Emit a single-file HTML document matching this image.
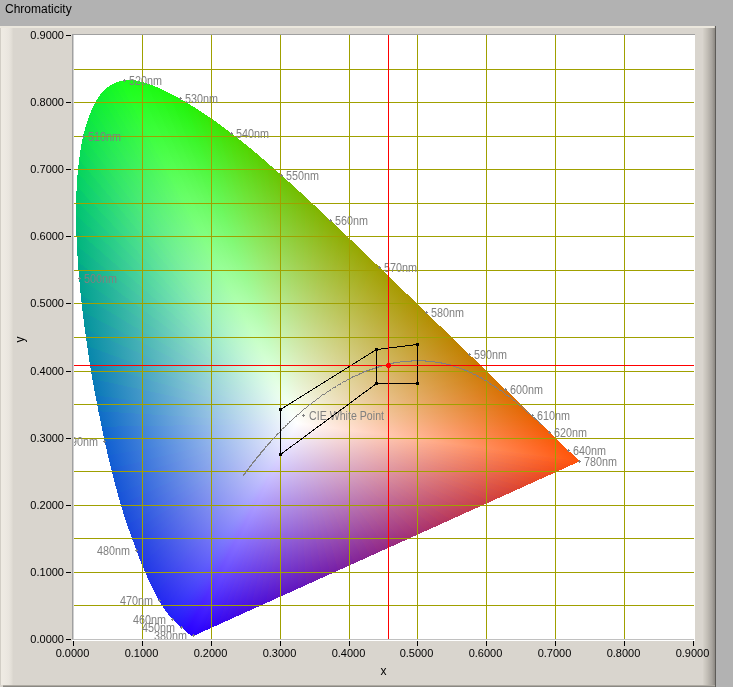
<!DOCTYPE html>
<html><head><meta charset="utf-8"><style>
html,body{margin:0;padding:0}
body{width:733px;height:687px;background:#b2b2b2;position:relative;overflow:hidden;font-family:"Liberation Sans",sans-serif;}
.t{position:absolute;white-space:nowrap}
#title{left:5px;top:2px;font-size:12px;color:#000}
#panel{position:absolute;left:0;top:26px;width:716px;height:661px;background:#d9d5ce}
#plot{position:absolute;left:72px;top:34px;width:623px;height:607px;background:#fff}
svg{position:absolute;left:0;top:0;will-change:transform}
#title{will-change:transform}
.tk{font-size:11px;fill:#000}
.wl{font-size:12.5px;fill:#808080}
</style></head><body>
<div class="t" id="title">Chromaticity</div>
<div id="panel"></div>
<div style="position:absolute;left:0;top:26px;width:714px;height:2px;background:#ebe7dd"></div>
<div style="position:absolute;left:0;top:28px;width:13px;height:657px;background:linear-gradient(to right,#d2cec6 0,#d2cec6 1px,#efebe3 1px,#ede9e2 5px,#e9e5de 9px,#e0dcd4 12px,#dad6ce 13px)"></div>
<div style="position:absolute;left:703px;top:28px;width:12px;height:659px;background:linear-gradient(to right,#d6d2ca,#c4c0b8 4px,#a8a49e 9px,#8c8882 12px)"></div>
<div style="position:absolute;left:715px;top:26px;width:1px;height:661px;background:#5e5c58"></div>
<div style="position:absolute;left:3px;top:685px;width:712px;height:1px;background:#aeaaa2"></div>
<div style="position:absolute;left:3px;top:686px;width:712px;height:1px;background:#8a8883"></div>
<div id="plot"></div>
<svg width="733" height="687" viewBox="0 0 733 687" shape-rendering="crispEdges">
<defs><linearGradient id="g0" gradientUnits="userSpaceOnUse" x1="297.39" y1="423.35" x2="297.39" y2="635.95"><stop offset="0" stop-color="#ffffff"/><stop offset="1" stop-color="#2800ff"/></linearGradient><linearGradient id="g1" gradientUnits="userSpaceOnUse" x1="297.39" y1="423.35" x2="193.82" y2="636.14"><stop offset="0" stop-color="#ffffff"/><stop offset="1" stop-color="#2800ff"/></linearGradient><linearGradient id="g2" gradientUnits="userSpaceOnUse" x1="297.39" y1="423.35" x2="193.82" y2="636.14"><stop offset="0" stop-color="#ffffff"/><stop offset="1" stop-color="#2800ff"/></linearGradient><linearGradient id="g3" gradientUnits="userSpaceOnUse" x1="297.39" y1="423.35" x2="297.39" y2="635.94"><stop offset="0" stop-color="#ffffff"/><stop offset="1" stop-color="#2800ff"/></linearGradient><linearGradient id="g4" gradientUnits="userSpaceOnUse" x1="297.39" y1="423.35" x2="297.39" y2="635.94"><stop offset="0" stop-color="#ffffff"/><stop offset="1" stop-color="#2800ff"/></linearGradient><linearGradient id="g5" gradientUnits="userSpaceOnUse" x1="297.39" y1="423.35" x2="349.90" y2="585.15"><stop offset="0" stop-color="#ffffff"/><stop offset="1" stop-color="#2800ff"/></linearGradient><linearGradient id="g6" gradientUnits="userSpaceOnUse" x1="297.39" y1="423.35" x2="340.42" y2="600.16"><stop offset="0" stop-color="#ffffff"/><stop offset="1" stop-color="#2800ff"/></linearGradient><linearGradient id="g7" gradientUnits="userSpaceOnUse" x1="297.39" y1="423.35" x2="355.58" y2="572.78"><stop offset="0" stop-color="#ffffff"/><stop offset="1" stop-color="#2800ff"/></linearGradient><linearGradient id="g8" gradientUnits="userSpaceOnUse" x1="297.39" y1="423.35" x2="340.42" y2="600.16"><stop offset="0" stop-color="#ffffff"/><stop offset="1" stop-color="#2800ff"/></linearGradient><linearGradient id="g9" gradientUnits="userSpaceOnUse" x1="297.39" y1="423.35" x2="333.47" y2="608.68"><stop offset="0" stop-color="#ffffff"/><stop offset="1" stop-color="#2800ff"/></linearGradient><linearGradient id="g10" gradientUnits="userSpaceOnUse" x1="297.39" y1="423.35" x2="297.39" y2="635.98"><stop offset="0" stop-color="#ffffff"/><stop offset="1" stop-color="#2800ff"/></linearGradient><linearGradient id="g11" gradientUnits="userSpaceOnUse" x1="297.39" y1="423.35" x2="297.39" y2="635.98"><stop offset="0" stop-color="#ffffff"/><stop offset="1" stop-color="#2800ff"/></linearGradient><linearGradient id="g12" gradientUnits="userSpaceOnUse" x1="297.39" y1="423.35" x2="253.70" y2="647.77"><stop offset="0" stop-color="#ffffff"/><stop offset="1" stop-color="#2800ff"/></linearGradient><linearGradient id="g13" gradientUnits="userSpaceOnUse" x1="297.39" y1="423.35" x2="297.39" y2="635.97"><stop offset="0" stop-color="#ffffff"/><stop offset="1" stop-color="#2800ff"/></linearGradient><linearGradient id="g14" gradientUnits="userSpaceOnUse" x1="297.39" y1="423.35" x2="333.47" y2="608.65"><stop offset="0" stop-color="#ffffff"/><stop offset="1" stop-color="#2800ff"/></linearGradient><linearGradient id="g15" gradientUnits="userSpaceOnUse" x1="297.39" y1="423.35" x2="355.55" y2="572.71"><stop offset="0" stop-color="#ffffff"/><stop offset="1" stop-color="#2800ff"/></linearGradient><linearGradient id="g16" gradientUnits="userSpaceOnUse" x1="297.39" y1="423.35" x2="361.08" y2="554.20"><stop offset="0" stop-color="#ffffff"/><stop offset="1" stop-color="#2800ff"/></linearGradient><linearGradient id="g17" gradientUnits="userSpaceOnUse" x1="297.39" y1="423.35" x2="362.37" y2="512.35"><stop offset="0" stop-color="#ffffff"/><stop offset="1" stop-color="#2800ff"/></linearGradient><linearGradient id="g18" gradientUnits="userSpaceOnUse" x1="297.39" y1="423.35" x2="363.46" y2="536.46"><stop offset="0" stop-color="#ffffff"/><stop offset="1" stop-color="#2800ff"/></linearGradient><linearGradient id="g19" gradientUnits="userSpaceOnUse" x1="297.39" y1="423.35" x2="355.56" y2="572.73"><stop offset="0" stop-color="#ffffff"/><stop offset="1" stop-color="#2800ff"/></linearGradient><linearGradient id="g20" gradientUnits="userSpaceOnUse" x1="297.39" y1="423.35" x2="333.48" y2="608.69"><stop offset="0" stop-color="#ffffff"/><stop offset="1" stop-color="#2800ff"/></linearGradient><linearGradient id="g21" gradientUnits="userSpaceOnUse" x1="297.39" y1="423.35" x2="328.34" y2="614.09"><stop offset="0" stop-color="#ffffff"/><stop offset="1" stop-color="#2800ff"/></linearGradient><linearGradient id="g22" gradientUnits="userSpaceOnUse" x1="297.39" y1="423.35" x2="297.39" y2="636.07"><stop offset="0" stop-color="#ffffff"/><stop offset="1" stop-color="#2800ff"/></linearGradient><linearGradient id="g23" gradientUnits="userSpaceOnUse" x1="297.39" y1="423.35" x2="297.39" y2="636.07"><stop offset="0" stop-color="#ffffff"/><stop offset="1" stop-color="#2800ff"/></linearGradient><linearGradient id="g24" gradientUnits="userSpaceOnUse" x1="297.39" y1="423.35" x2="297.39" y2="636.07"><stop offset="0" stop-color="#ffffff"/><stop offset="1" stop-color="#2800ff"/></linearGradient><linearGradient id="g25" gradientUnits="userSpaceOnUse" x1="297.39" y1="423.35" x2="297.39" y2="636.07"><stop offset="0" stop-color="#ffffff"/><stop offset="1" stop-color="#2800ff"/></linearGradient><linearGradient id="g26" gradientUnits="userSpaceOnUse" x1="297.39" y1="423.35" x2="297.39" y2="636.07"><stop offset="0" stop-color="#ffffff"/><stop offset="1" stop-color="#2800ff"/></linearGradient><linearGradient id="g27" gradientUnits="userSpaceOnUse" x1="297.39" y1="423.35" x2="273.44" y2="644.82"><stop offset="0" stop-color="#ffffff"/><stop offset="1" stop-color="#2800ff"/></linearGradient><linearGradient id="g28" gradientUnits="userSpaceOnUse" x1="297.39" y1="423.35" x2="297.39" y2="636.07"><stop offset="0" stop-color="#ffffff"/><stop offset="1" stop-color="#2800ff"/></linearGradient><linearGradient id="g29" gradientUnits="userSpaceOnUse" x1="297.39" y1="423.35" x2="273.44" y2="644.83"><stop offset="0" stop-color="#ffffff"/><stop offset="1" stop-color="#2800ff"/></linearGradient><linearGradient id="g30" gradientUnits="userSpaceOnUse" x1="297.39" y1="423.35" x2="297.39" y2="636.06"><stop offset="0" stop-color="#ffffff"/><stop offset="1" stop-color="#2800ff"/></linearGradient><linearGradient id="g31" gradientUnits="userSpaceOnUse" x1="297.39" y1="423.35" x2="297.39" y2="636.06"><stop offset="0" stop-color="#ffffff"/><stop offset="1" stop-color="#2800ff"/></linearGradient><linearGradient id="g32" gradientUnits="userSpaceOnUse" x1="297.39" y1="423.35" x2="297.39" y2="636.06"><stop offset="0" stop-color="#ffffff"/><stop offset="1" stop-color="#2800ff"/></linearGradient><linearGradient id="g33" gradientUnits="userSpaceOnUse" x1="297.39" y1="423.35" x2="275.89" y2="644.21"><stop offset="0" stop-color="#ffffff"/><stop offset="1" stop-color="#2800ff"/></linearGradient><linearGradient id="g34" gradientUnits="userSpaceOnUse" x1="297.39" y1="423.35" x2="257.69" y2="647.66"><stop offset="0" stop-color="#ffffff"/><stop offset="1" stop-color="#2800ff"/></linearGradient><linearGradient id="g35" gradientUnits="userSpaceOnUse" x1="297.39" y1="423.35" x2="242.64" y2="648.35"><stop offset="0" stop-color="#ffffff"/><stop offset="1" stop-color="#2800ff"/></linearGradient><linearGradient id="g36" gradientUnits="userSpaceOnUse" x1="297.39" y1="423.35" x2="224.92" y2="646.71"><stop offset="0" stop-color="#ffffff"/><stop offset="1" stop-color="#2800ff"/></linearGradient><linearGradient id="g37" gradientUnits="userSpaceOnUse" x1="297.39" y1="423.35" x2="214.59" y2="644.50"><stop offset="0" stop-color="#ffffff"/><stop offset="1" stop-color="#2800ff"/></linearGradient><linearGradient id="g38" gradientUnits="userSpaceOnUse" x1="297.39" y1="423.35" x2="193.51" y2="636.79"><stop offset="0" stop-color="#ffffff"/><stop offset="1" stop-color="#2800ff"/></linearGradient><linearGradient id="g39" gradientUnits="userSpaceOnUse" x1="297.39" y1="423.35" x2="198.58" y2="639.06"><stop offset="0" stop-color="#ffffff"/><stop offset="1" stop-color="#2800ff"/></linearGradient><linearGradient id="g40" gradientUnits="userSpaceOnUse" x1="297.39" y1="423.35" x2="189.15" y2="634.61"><stop offset="0" stop-color="#ffffff"/><stop offset="1" stop-color="#2800ff"/></linearGradient><linearGradient id="g41" gradientUnits="userSpaceOnUse" x1="297.39" y1="423.35" x2="175.25" y2="626.03"><stop offset="0" stop-color="#ffffff"/><stop offset="1" stop-color="#2800ff"/></linearGradient><linearGradient id="g42" gradientUnits="userSpaceOnUse" x1="297.39" y1="423.35" x2="179.24" y2="628.76"><stop offset="0" stop-color="#ffffff"/><stop offset="1" stop-color="#2800ff"/></linearGradient><linearGradient id="g43" gradientUnits="userSpaceOnUse" x1="297.39" y1="423.35" x2="168.98" y2="621.23"><stop offset="0" stop-color="#ffffff"/><stop offset="1" stop-color="#2800ff"/></linearGradient><linearGradient id="g44" gradientUnits="userSpaceOnUse" x1="297.39" y1="423.35" x2="167.32" y2="619.84"><stop offset="0" stop-color="#ffffff"/><stop offset="1" stop-color="#2800ff"/></linearGradient><linearGradient id="g45" gradientUnits="userSpaceOnUse" x1="297.39" y1="423.35" x2="161.42" y2="614.49"><stop offset="0" stop-color="#ffffff"/><stop offset="1" stop-color="#2800ff"/></linearGradient><linearGradient id="g46" gradientUnits="userSpaceOnUse" x1="297.39" y1="423.35" x2="157.36" y2="610.35"><stop offset="0" stop-color="#ffffff"/><stop offset="1" stop-color="#2800ff"/></linearGradient><linearGradient id="g47" gradientUnits="userSpaceOnUse" x1="297.39" y1="423.35" x2="155.73" y2="608.57"><stop offset="0" stop-color="#ffffff"/><stop offset="1" stop-color="#2800ff"/></linearGradient><linearGradient id="g48" gradientUnits="userSpaceOnUse" x1="297.39" y1="423.35" x2="154.36" y2="607.02"><stop offset="0" stop-color="#ffffff"/><stop offset="1" stop-color="#2800ff"/></linearGradient><linearGradient id="g49" gradientUnits="userSpaceOnUse" x1="297.39" y1="423.35" x2="153.19" y2="605.67"><stop offset="0" stop-color="#ffffff"/><stop offset="1" stop-color="#2800ff"/></linearGradient><linearGradient id="g50" gradientUnits="userSpaceOnUse" x1="297.39" y1="423.35" x2="151.74" y2="603.93"><stop offset="0" stop-color="#ffffff"/><stop offset="1" stop-color="#2800ff"/></linearGradient><linearGradient id="g51" gradientUnits="userSpaceOnUse" x1="297.39" y1="423.35" x2="155.37" y2="608.15"><stop offset="0" stop-color="#ffffff"/><stop offset="1" stop-color="#2800ff"/></linearGradient><linearGradient id="g52" gradientUnits="userSpaceOnUse" x1="297.39" y1="423.35" x2="150.21" y2="602.03"><stop offset="0" stop-color="#ffffff"/><stop offset="1" stop-color="#2800ff"/></linearGradient><linearGradient id="g53" gradientUnits="userSpaceOnUse" x1="297.39" y1="423.35" x2="149.29" y2="600.85"><stop offset="0" stop-color="#ffffff"/><stop offset="1" stop-color="#2800ff"/></linearGradient><linearGradient id="g54" gradientUnits="userSpaceOnUse" x1="297.39" y1="423.35" x2="148.76" y2="600.15"><stop offset="0" stop-color="#ffffff"/><stop offset="1" stop-color="#2800ff"/></linearGradient><linearGradient id="g55" gradientUnits="userSpaceOnUse" x1="297.39" y1="423.35" x2="145.10" y2="595.06"><stop offset="0" stop-color="#ffffff"/><stop offset="1" stop-color="#2800ff"/></linearGradient><linearGradient id="g56" gradientUnits="userSpaceOnUse" x1="297.39" y1="423.35" x2="144.82" y2="594.66"><stop offset="0" stop-color="#ffffff"/><stop offset="1" stop-color="#2800ff"/></linearGradient><linearGradient id="g57" gradientUnits="userSpaceOnUse" x1="297.39" y1="423.35" x2="143.15" y2="592.13"><stop offset="0" stop-color="#ffffff"/><stop offset="1" stop-color="#2800ff"/></linearGradient><linearGradient id="g58" gradientUnits="userSpaceOnUse" x1="297.39" y1="423.35" x2="142.91" y2="591.76"><stop offset="0" stop-color="#ffffff"/><stop offset="1" stop-color="#2800ff"/></linearGradient><linearGradient id="g59" gradientUnits="userSpaceOnUse" x1="297.39" y1="423.35" x2="145.13" y2="595.09"><stop offset="0" stop-color="#ffffff"/><stop offset="1" stop-color="#2800ff"/></linearGradient><linearGradient id="g60" gradientUnits="userSpaceOnUse" x1="297.39" y1="423.35" x2="146.06" y2="596.41"><stop offset="0" stop-color="#ffffff"/><stop offset="1" stop-color="#2801ff"/></linearGradient><linearGradient id="g61" gradientUnits="userSpaceOnUse" x1="297.39" y1="423.35" x2="146.93" y2="597.59"><stop offset="0" stop-color="#ffffff"/><stop offset="1" stop-color="#2802ff"/></linearGradient><linearGradient id="g62" gradientUnits="userSpaceOnUse" x1="297.39" y1="423.35" x2="146.52" y2="597.04"><stop offset="0" stop-color="#ffffff"/><stop offset="1" stop-color="#2704fe"/></linearGradient><linearGradient id="g63" gradientUnits="userSpaceOnUse" x1="297.39" y1="423.35" x2="148.18" y2="599.24"><stop offset="0" stop-color="#ffffff"/><stop offset="1" stop-color="#2705fe"/></linearGradient><linearGradient id="g64" gradientUnits="userSpaceOnUse" x1="297.39" y1="423.35" x2="147.49" y2="598.34"><stop offset="0" stop-color="#ffffff"/><stop offset="1" stop-color="#2707fe"/></linearGradient><linearGradient id="g65" gradientUnits="userSpaceOnUse" x1="297.39" y1="423.35" x2="147.89" y2="598.87"><stop offset="0" stop-color="#ffffff"/><stop offset="1" stop-color="#2708fe"/></linearGradient><linearGradient id="g66" gradientUnits="userSpaceOnUse" x1="297.39" y1="423.35" x2="147.41" y2="598.24"><stop offset="0" stop-color="#ffffff"/><stop offset="1" stop-color="#260afd"/></linearGradient><linearGradient id="g67" gradientUnits="userSpaceOnUse" x1="297.39" y1="423.35" x2="148.58" y2="599.73"><stop offset="0" stop-color="#ffffff"/><stop offset="1" stop-color="#260bfd"/></linearGradient><linearGradient id="g68" gradientUnits="userSpaceOnUse" x1="297.39" y1="423.35" x2="147.34" y2="598.17"><stop offset="0" stop-color="#ffffff"/><stop offset="1" stop-color="#260dfd"/></linearGradient><linearGradient id="g69" gradientUnits="userSpaceOnUse" x1="297.39" y1="423.35" x2="147.58" y2="598.47"><stop offset="0" stop-color="#ffffff"/><stop offset="1" stop-color="#260efd"/></linearGradient><linearGradient id="g70" gradientUnits="userSpaceOnUse" x1="297.39" y1="423.35" x2="148.00" y2="598.99"><stop offset="0" stop-color="#ffffff"/><stop offset="1" stop-color="#2510fc"/></linearGradient><linearGradient id="g71" gradientUnits="userSpaceOnUse" x1="297.39" y1="423.35" x2="148.28" y2="599.34"><stop offset="0" stop-color="#ffffff"/><stop offset="1" stop-color="#2511fc"/></linearGradient><linearGradient id="g72" gradientUnits="userSpaceOnUse" x1="297.39" y1="423.35" x2="147.15" y2="597.95"><stop offset="0" stop-color="#ffffff"/><stop offset="1" stop-color="#2513fc"/></linearGradient><linearGradient id="g73" gradientUnits="userSpaceOnUse" x1="297.39" y1="423.35" x2="145.99" y2="596.49"><stop offset="0" stop-color="#ffffff"/><stop offset="1" stop-color="#2514fc"/></linearGradient><linearGradient id="g74" gradientUnits="userSpaceOnUse" x1="297.39" y1="423.35" x2="143.74" y2="593.54"><stop offset="0" stop-color="#ffffff"/><stop offset="1" stop-color="#2416fb"/></linearGradient><linearGradient id="g75" gradientUnits="userSpaceOnUse" x1="297.39" y1="423.35" x2="142.40" y2="591.70"><stop offset="0" stop-color="#ffffff"/><stop offset="1" stop-color="#2417fb"/></linearGradient><linearGradient id="g76" gradientUnits="userSpaceOnUse" x1="297.39" y1="423.35" x2="142.76" y2="592.20"><stop offset="0" stop-color="#ffffff"/><stop offset="1" stop-color="#2419fb"/></linearGradient><linearGradient id="g77" gradientUnits="userSpaceOnUse" x1="297.39" y1="423.35" x2="141.07" y2="589.84"><stop offset="0" stop-color="#ffffff"/><stop offset="1" stop-color="#241afb"/></linearGradient><linearGradient id="g78" gradientUnits="userSpaceOnUse" x1="297.39" y1="423.35" x2="137.83" y2="585.04"><stop offset="0" stop-color="#ffffff"/><stop offset="1" stop-color="#231cfa"/></linearGradient><linearGradient id="g79" gradientUnits="userSpaceOnUse" x1="297.39" y1="423.35" x2="134.44" y2="579.45"><stop offset="0" stop-color="#ffffff"/><stop offset="1" stop-color="#231dfa"/></linearGradient><linearGradient id="g80" gradientUnits="userSpaceOnUse" x1="297.39" y1="423.35" x2="132.83" y2="576.58"><stop offset="0" stop-color="#ffffff"/><stop offset="1" stop-color="#231efa"/></linearGradient><linearGradient id="g81" gradientUnits="userSpaceOnUse" x1="297.39" y1="423.35" x2="132.65" y2="576.24"><stop offset="0" stop-color="#ffffff"/><stop offset="1" stop-color="#2320f8"/></linearGradient><linearGradient id="g82" gradientUnits="userSpaceOnUse" x1="297.39" y1="423.35" x2="130.03" y2="571.22"><stop offset="0" stop-color="#ffffff"/><stop offset="1" stop-color="#2320f8"/></linearGradient><linearGradient id="g83" gradientUnits="userSpaceOnUse" x1="297.39" y1="423.35" x2="126.60" y2="563.71"><stop offset="0" stop-color="#ffffff"/><stop offset="1" stop-color="#2322f6"/></linearGradient><linearGradient id="g84" gradientUnits="userSpaceOnUse" x1="297.39" y1="423.35" x2="123.34" y2="555.03"><stop offset="0" stop-color="#ffffff"/><stop offset="1" stop-color="#2322f6"/></linearGradient><linearGradient id="g85" gradientUnits="userSpaceOnUse" x1="297.39" y1="423.35" x2="121.71" y2="549.86"><stop offset="0" stop-color="#ffffff"/><stop offset="1" stop-color="#2324f4"/></linearGradient><linearGradient id="g86" gradientUnits="userSpaceOnUse" x1="297.39" y1="423.35" x2="120.74" y2="546.43"><stop offset="0" stop-color="#ffffff"/><stop offset="1" stop-color="#2324f4"/></linearGradient><linearGradient id="g87" gradientUnits="userSpaceOnUse" x1="297.39" y1="423.35" x2="119.57" y2="541.83"><stop offset="0" stop-color="#ffffff"/><stop offset="1" stop-color="#2326f2"/></linearGradient><linearGradient id="g88" gradientUnits="userSpaceOnUse" x1="297.39" y1="423.35" x2="118.29" y2="535.99"><stop offset="0" stop-color="#ffffff"/><stop offset="1" stop-color="#2326f2"/></linearGradient><linearGradient id="g89" gradientUnits="userSpaceOnUse" x1="297.39" y1="423.35" x2="117.09" y2="528.95"><stop offset="0" stop-color="#ffffff"/><stop offset="1" stop-color="#2328f0"/></linearGradient><linearGradient id="g90" gradientUnits="userSpaceOnUse" x1="297.39" y1="423.35" x2="116.54" y2="524.89"><stop offset="0" stop-color="#ffffff"/><stop offset="1" stop-color="#2329ef"/></linearGradient><linearGradient id="g91" gradientUnits="userSpaceOnUse" x1="297.39" y1="423.35" x2="116.25" y2="522.49"><stop offset="0" stop-color="#ffffff"/><stop offset="1" stop-color="#222bee"/></linearGradient><linearGradient id="g92" gradientUnits="userSpaceOnUse" x1="297.39" y1="423.35" x2="115.84" y2="518.74"><stop offset="0" stop-color="#ffffff"/><stop offset="1" stop-color="#222eec"/></linearGradient><linearGradient id="g93" gradientUnits="userSpaceOnUse" x1="297.39" y1="423.35" x2="115.38" y2="513.28"><stop offset="0" stop-color="#ffffff"/><stop offset="1" stop-color="#2130eb"/></linearGradient><linearGradient id="g94" gradientUnits="userSpaceOnUse" x1="297.39" y1="423.35" x2="115.09" y2="508.23"><stop offset="0" stop-color="#ffffff"/><stop offset="1" stop-color="#2132e9"/></linearGradient><linearGradient id="g95" gradientUnits="userSpaceOnUse" x1="297.39" y1="423.35" x2="114.95" y2="504.47"><stop offset="0" stop-color="#ffffff"/><stop offset="1" stop-color="#2034e8"/></linearGradient><linearGradient id="g96" gradientUnits="userSpaceOnUse" x1="297.39" y1="423.35" x2="114.86" y2="501.91"><stop offset="0" stop-color="#ffffff"/><stop offset="1" stop-color="#2036e6"/></linearGradient><linearGradient id="g97" gradientUnits="userSpaceOnUse" x1="297.39" y1="423.35" x2="114.76" y2="499.10"><stop offset="0" stop-color="#ffffff"/><stop offset="1" stop-color="#1f38e5"/></linearGradient><linearGradient id="g98" gradientUnits="userSpaceOnUse" x1="297.39" y1="423.35" x2="114.65" y2="495.86"><stop offset="0" stop-color="#ffffff"/><stop offset="1" stop-color="#1f3be3"/></linearGradient><linearGradient id="g99" gradientUnits="userSpaceOnUse" x1="297.39" y1="423.35" x2="114.53" y2="492.37"><stop offset="0" stop-color="#ffffff"/><stop offset="1" stop-color="#1e3de2"/></linearGradient><linearGradient id="g100" gradientUnits="userSpaceOnUse" x1="297.39" y1="423.35" x2="114.46" y2="490.89"><stop offset="0" stop-color="#ffffff"/><stop offset="1" stop-color="#1d40e0"/></linearGradient><linearGradient id="g101" gradientUnits="userSpaceOnUse" x1="297.39" y1="423.35" x2="114.39" y2="490.00"><stop offset="0" stop-color="#ffffff"/><stop offset="1" stop-color="#1c43de"/></linearGradient><linearGradient id="g102" gradientUnits="userSpaceOnUse" x1="297.39" y1="423.35" x2="114.13" y2="487.45"><stop offset="0" stop-color="#ffffff"/><stop offset="1" stop-color="#1a47dd"/></linearGradient><linearGradient id="g103" gradientUnits="userSpaceOnUse" x1="297.39" y1="423.35" x2="113.72" y2="483.90"><stop offset="0" stop-color="#ffffff"/><stop offset="1" stop-color="#194bdb"/></linearGradient><linearGradient id="g104" gradientUnits="userSpaceOnUse" x1="297.39" y1="423.35" x2="113.14" y2="479.38"><stop offset="0" stop-color="#ffffff"/><stop offset="1" stop-color="#184ed9"/></linearGradient><linearGradient id="g105" gradientUnits="userSpaceOnUse" x1="297.39" y1="423.35" x2="112.63" y2="475.77"><stop offset="0" stop-color="#ffffff"/><stop offset="1" stop-color="#1652d8"/></linearGradient><linearGradient id="g106" gradientUnits="userSpaceOnUse" x1="297.39" y1="423.35" x2="112.22" y2="473.32"><stop offset="0" stop-color="#ffffff"/><stop offset="1" stop-color="#1555d6"/></linearGradient><linearGradient id="g107" gradientUnits="userSpaceOnUse" x1="297.39" y1="423.35" x2="111.71" y2="470.93"><stop offset="0" stop-color="#ffffff"/><stop offset="1" stop-color="#1459d4"/></linearGradient><linearGradient id="g108" gradientUnits="userSpaceOnUse" x1="297.39" y1="423.35" x2="111.05" y2="468.32"><stop offset="0" stop-color="#ffffff"/><stop offset="1" stop-color="#125dd3"/></linearGradient><linearGradient id="g109" gradientUnits="userSpaceOnUse" x1="297.39" y1="423.35" x2="110.30" y2="465.82"><stop offset="0" stop-color="#ffffff"/><stop offset="1" stop-color="#1160d1"/></linearGradient><linearGradient id="g110" gradientUnits="userSpaceOnUse" x1="297.39" y1="423.35" x2="109.54" y2="463.69"><stop offset="0" stop-color="#ffffff"/><stop offset="1" stop-color="#0f65cd"/></linearGradient><linearGradient id="g111" gradientUnits="userSpaceOnUse" x1="297.39" y1="423.35" x2="108.84" y2="462.00"><stop offset="0" stop-color="#ffffff"/><stop offset="1" stop-color="#0e6cc6"/></linearGradient><linearGradient id="g112" gradientUnits="userSpaceOnUse" x1="297.39" y1="423.35" x2="107.88" y2="460.05"><stop offset="0" stop-color="#ffffff"/><stop offset="1" stop-color="#0c73bf"/></linearGradient><linearGradient id="g113" gradientUnits="userSpaceOnUse" x1="297.39" y1="423.35" x2="106.66" y2="457.85"><stop offset="0" stop-color="#ffffff"/><stop offset="1" stop-color="#0a79b8"/></linearGradient><linearGradient id="g114" gradientUnits="userSpaceOnUse" x1="297.39" y1="423.35" x2="105.02" y2="455.22"><stop offset="0" stop-color="#ffffff"/><stop offset="1" stop-color="#0980b1"/></linearGradient><linearGradient id="g115" gradientUnits="userSpaceOnUse" x1="297.39" y1="423.35" x2="103.36" y2="452.79"><stop offset="0" stop-color="#ffffff"/><stop offset="1" stop-color="#0787ab"/></linearGradient><linearGradient id="g116" gradientUnits="userSpaceOnUse" x1="297.39" y1="423.35" x2="101.82" y2="450.74"><stop offset="0" stop-color="#ffffff"/><stop offset="1" stop-color="#068ea4"/></linearGradient><linearGradient id="g117" gradientUnits="userSpaceOnUse" x1="297.39" y1="423.35" x2="99.94" y2="448.42"><stop offset="0" stop-color="#ffffff"/><stop offset="1" stop-color="#04949d"/></linearGradient><linearGradient id="g118" gradientUnits="userSpaceOnUse" x1="297.39" y1="423.35" x2="97.58" y2="445.72"><stop offset="0" stop-color="#ffffff"/><stop offset="1" stop-color="#029b96"/></linearGradient><linearGradient id="g119" gradientUnits="userSpaceOnUse" x1="297.39" y1="423.35" x2="94.50" y2="442.35"><stop offset="0" stop-color="#ffffff"/><stop offset="1" stop-color="#01a28f"/></linearGradient><linearGradient id="g120" gradientUnits="userSpaceOnUse" x1="297.39" y1="423.35" x2="91.34" y2="439.00"><stop offset="0" stop-color="#ffffff"/><stop offset="1" stop-color="#00a889"/></linearGradient><linearGradient id="g121" gradientUnits="userSpaceOnUse" x1="297.39" y1="423.35" x2="88.38" y2="435.95"><stop offset="0" stop-color="#ffffff"/><stop offset="1" stop-color="#00b083"/></linearGradient><linearGradient id="g122" gradientUnits="userSpaceOnUse" x1="297.39" y1="423.35" x2="84.56" y2="432.07"><stop offset="0" stop-color="#ffffff"/><stop offset="1" stop-color="#00b67d"/></linearGradient><linearGradient id="g123" gradientUnits="userSpaceOnUse" x1="297.39" y1="423.35" x2="79.83" y2="427.26"><stop offset="0" stop-color="#ffffff"/><stop offset="1" stop-color="#00be77"/></linearGradient><linearGradient id="g124" gradientUnits="userSpaceOnUse" x1="297.39" y1="423.35" x2="73.76" y2="420.92"><stop offset="0" stop-color="#ffffff"/><stop offset="1" stop-color="#00c471"/></linearGradient><linearGradient id="g125" gradientUnits="userSpaceOnUse" x1="297.39" y1="423.35" x2="67.26" y2="413.76"><stop offset="0" stop-color="#ffffff"/><stop offset="1" stop-color="#01ca6a"/></linearGradient><linearGradient id="g126" gradientUnits="userSpaceOnUse" x1="297.39" y1="423.35" x2="61.13" y2="406.62"><stop offset="0" stop-color="#ffffff"/><stop offset="1" stop-color="#03d064"/></linearGradient><linearGradient id="g127" gradientUnits="userSpaceOnUse" x1="297.39" y1="423.35" x2="53.96" y2="397.67"><stop offset="0" stop-color="#ffffff"/><stop offset="1" stop-color="#05d45c"/></linearGradient><linearGradient id="g128" gradientUnits="userSpaceOnUse" x1="297.39" y1="423.35" x2="45.88" y2="386.58"><stop offset="0" stop-color="#ffffff"/><stop offset="1" stop-color="#07da56"/></linearGradient><linearGradient id="g129" gradientUnits="userSpaceOnUse" x1="297.39" y1="423.35" x2="36.51" y2="371.82"><stop offset="0" stop-color="#ffffff"/><stop offset="1" stop-color="#09de4e"/></linearGradient><linearGradient id="g130" gradientUnits="userSpaceOnUse" x1="297.39" y1="423.35" x2="26.37" y2="352.23"><stop offset="0" stop-color="#ffffff"/><stop offset="1" stop-color="#0ae348"/></linearGradient><linearGradient id="g131" gradientUnits="userSpaceOnUse" x1="297.39" y1="423.35" x2="17.53" y2="329.58"><stop offset="0" stop-color="#ffffff"/><stop offset="1" stop-color="#0ce642"/></linearGradient><linearGradient id="g132" gradientUnits="userSpaceOnUse" x1="297.39" y1="423.35" x2="10.68" y2="303.13"><stop offset="0" stop-color="#ffffff"/><stop offset="1" stop-color="#0cea3c"/></linearGradient><linearGradient id="g133" gradientUnits="userSpaceOnUse" x1="297.39" y1="423.35" x2="7.06" y2="272.45"><stop offset="0" stop-color="#ffffff"/><stop offset="1" stop-color="#0eed36"/></linearGradient><linearGradient id="g134" gradientUnits="userSpaceOnUse" x1="297.39" y1="423.35" x2="8.83" y2="234.35"><stop offset="0" stop-color="#ffffff"/><stop offset="1" stop-color="#0ef030"/></linearGradient><linearGradient id="g135" gradientUnits="userSpaceOnUse" x1="297.39" y1="423.35" x2="23.56" y2="181.63"><stop offset="0" stop-color="#ffffff"/><stop offset="1" stop-color="#10f32b"/></linearGradient><linearGradient id="g136" gradientUnits="userSpaceOnUse" x1="297.39" y1="423.35" x2="59.86" y2="125.49"><stop offset="0" stop-color="#ffffff"/><stop offset="1" stop-color="#12f627"/></linearGradient><linearGradient id="g137" gradientUnits="userSpaceOnUse" x1="297.39" y1="423.35" x2="110.95" y2="85.14"><stop offset="0" stop-color="#ffffff"/><stop offset="1" stop-color="#14f823"/></linearGradient><linearGradient id="g138" gradientUnits="userSpaceOnUse" x1="297.39" y1="423.35" x2="164.91" y2="64.59"><stop offset="0" stop-color="#ffffff"/><stop offset="1" stop-color="#16fb1f"/></linearGradient><linearGradient id="g139" gradientUnits="userSpaceOnUse" x1="297.39" y1="423.35" x2="210.99" y2="59.63"><stop offset="0" stop-color="#ffffff"/><stop offset="1" stop-color="#18fe1b"/></linearGradient><linearGradient id="g140" gradientUnits="userSpaceOnUse" x1="297.39" y1="423.35" x2="271.83" y2="69.50"><stop offset="0" stop-color="#ffffff"/><stop offset="1" stop-color="#19fe18"/></linearGradient><linearGradient id="g141" gradientUnits="userSpaceOnUse" x1="297.39" y1="423.35" x2="332.23" y2="101.65"><stop offset="0" stop-color="#ffffff"/><stop offset="1" stop-color="#1afe17"/></linearGradient><linearGradient id="g142" gradientUnits="userSpaceOnUse" x1="297.39" y1="423.35" x2="364.61" y2="133.49"><stop offset="0" stop-color="#ffffff"/><stop offset="1" stop-color="#1afc15"/></linearGradient><linearGradient id="g143" gradientUnits="userSpaceOnUse" x1="297.39" y1="423.35" x2="379.77" y2="154.91"><stop offset="0" stop-color="#ffffff"/><stop offset="1" stop-color="#1bfc14"/></linearGradient><linearGradient id="g144" gradientUnits="userSpaceOnUse" x1="297.39" y1="423.35" x2="384.89" y2="163.64"><stop offset="0" stop-color="#ffffff"/><stop offset="1" stop-color="#1bfa12"/></linearGradient><linearGradient id="g145" gradientUnits="userSpaceOnUse" x1="297.39" y1="423.35" x2="391.73" y2="176.96"><stop offset="0" stop-color="#ffffff"/><stop offset="1" stop-color="#1cfa11"/></linearGradient><linearGradient id="g146" gradientUnits="userSpaceOnUse" x1="297.39" y1="423.35" x2="400.39" y2="198.54"><stop offset="0" stop-color="#ffffff"/><stop offset="1" stop-color="#1cf80f"/></linearGradient><linearGradient id="g147" gradientUnits="userSpaceOnUse" x1="297.39" y1="423.35" x2="404.58" y2="212.65"><stop offset="0" stop-color="#ffffff"/><stop offset="1" stop-color="#1df80e"/></linearGradient><linearGradient id="g148" gradientUnits="userSpaceOnUse" x1="297.39" y1="423.35" x2="406.67" y2="221.47"><stop offset="0" stop-color="#ffffff"/><stop offset="1" stop-color="#1df60c"/></linearGradient><linearGradient id="g149" gradientUnits="userSpaceOnUse" x1="297.39" y1="423.35" x2="407.28" y2="224.30"><stop offset="0" stop-color="#ffffff"/><stop offset="1" stop-color="#1ef60b"/></linearGradient><linearGradient id="g150" gradientUnits="userSpaceOnUse" x1="297.39" y1="423.35" x2="408.08" y2="228.17"><stop offset="0" stop-color="#ffffff"/><stop offset="1" stop-color="#20f40a"/></linearGradient><linearGradient id="g151" gradientUnits="userSpaceOnUse" x1="297.39" y1="423.35" x2="409.47" y2="235.76"><stop offset="0" stop-color="#ffffff"/><stop offset="1" stop-color="#24f108"/></linearGradient><linearGradient id="g152" gradientUnits="userSpaceOnUse" x1="297.39" y1="423.35" x2="410.37" y2="241.61"><stop offset="0" stop-color="#ffffff"/><stop offset="1" stop-color="#28ef08"/></linearGradient><linearGradient id="g153" gradientUnits="userSpaceOnUse" x1="297.39" y1="423.35" x2="411.08" y2="246.99"><stop offset="0" stop-color="#ffffff"/><stop offset="1" stop-color="#2cec06"/></linearGradient><linearGradient id="g154" gradientUnits="userSpaceOnUse" x1="297.39" y1="423.35" x2="411.53" y2="250.92"><stop offset="0" stop-color="#ffffff"/><stop offset="1" stop-color="#30ea06"/></linearGradient><linearGradient id="g155" gradientUnits="userSpaceOnUse" x1="297.39" y1="423.35" x2="411.98" y2="255.35"><stop offset="0" stop-color="#ffffff"/><stop offset="1" stop-color="#34e704"/></linearGradient><linearGradient id="g156" gradientUnits="userSpaceOnUse" x1="297.39" y1="423.35" x2="412.39" y2="260.38"><stop offset="0" stop-color="#ffffff"/><stop offset="1" stop-color="#38e504"/></linearGradient><linearGradient id="g157" gradientUnits="userSpaceOnUse" x1="297.39" y1="423.35" x2="412.69" y2="264.85"><stop offset="0" stop-color="#ffffff"/><stop offset="1" stop-color="#3ce202"/></linearGradient><linearGradient id="g158" gradientUnits="userSpaceOnUse" x1="297.39" y1="423.35" x2="412.86" y2="268.16"><stop offset="0" stop-color="#ffffff"/><stop offset="1" stop-color="#40e002"/></linearGradient><linearGradient id="g159" gradientUnits="userSpaceOnUse" x1="297.39" y1="423.35" x2="412.99" y2="270.94"><stop offset="0" stop-color="#ffffff"/><stop offset="1" stop-color="#44dd00"/></linearGradient><linearGradient id="g160" gradientUnits="userSpaceOnUse" x1="297.39" y1="423.35" x2="413.12" y2="274.33"><stop offset="0" stop-color="#ffffff"/><stop offset="1" stop-color="#48db00"/></linearGradient><linearGradient id="g161" gradientUnits="userSpaceOnUse" x1="297.39" y1="423.35" x2="413.21" y2="277.39"><stop offset="0" stop-color="#ffffff"/><stop offset="1" stop-color="#4bd800"/></linearGradient><linearGradient id="g162" gradientUnits="userSpaceOnUse" x1="297.39" y1="423.35" x2="413.28" y2="280.36"><stop offset="0" stop-color="#ffffff"/><stop offset="1" stop-color="#4fd600"/></linearGradient><linearGradient id="g163" gradientUnits="userSpaceOnUse" x1="297.39" y1="423.35" x2="413.33" y2="282.80"><stop offset="0" stop-color="#ffffff"/><stop offset="1" stop-color="#52d300"/></linearGradient><linearGradient id="g164" gradientUnits="userSpaceOnUse" x1="297.39" y1="423.35" x2="413.36" y2="284.32"><stop offset="0" stop-color="#ffffff"/><stop offset="1" stop-color="#56d100"/></linearGradient><linearGradient id="g165" gradientUnits="userSpaceOnUse" x1="297.39" y1="423.35" x2="413.41" y2="286.24"><stop offset="0" stop-color="#ffffff"/><stop offset="1" stop-color="#59ce00"/></linearGradient><linearGradient id="g166" gradientUnits="userSpaceOnUse" x1="297.39" y1="423.35" x2="413.46" y2="288.50"><stop offset="0" stop-color="#ffffff"/><stop offset="1" stop-color="#5dcc00"/></linearGradient><linearGradient id="g167" gradientUnits="userSpaceOnUse" x1="297.39" y1="423.35" x2="413.51" y2="290.50"><stop offset="0" stop-color="#ffffff"/><stop offset="1" stop-color="#60c900"/></linearGradient><linearGradient id="g168" gradientUnits="userSpaceOnUse" x1="297.39" y1="423.35" x2="413.53" y2="291.31"><stop offset="0" stop-color="#ffffff"/><stop offset="1" stop-color="#64c700"/></linearGradient><linearGradient id="g169" gradientUnits="userSpaceOnUse" x1="297.39" y1="423.35" x2="413.59" y2="292.65"><stop offset="0" stop-color="#ffffff"/><stop offset="1" stop-color="#67c400"/></linearGradient><linearGradient id="g170" gradientUnits="userSpaceOnUse" x1="297.39" y1="423.35" x2="413.63" y2="293.42"><stop offset="0" stop-color="#ffffff"/><stop offset="1" stop-color="#6ac200"/></linearGradient><linearGradient id="g171" gradientUnits="userSpaceOnUse" x1="297.39" y1="423.35" x2="413.71" y2="294.87"><stop offset="0" stop-color="#ffffff"/><stop offset="1" stop-color="#6ec000"/></linearGradient><linearGradient id="g172" gradientUnits="userSpaceOnUse" x1="297.39" y1="423.35" x2="413.78" y2="295.94"><stop offset="0" stop-color="#ffffff"/><stop offset="1" stop-color="#70be00"/></linearGradient><linearGradient id="g173" gradientUnits="userSpaceOnUse" x1="297.39" y1="423.35" x2="413.83" y2="296.46"><stop offset="0" stop-color="#ffffff"/><stop offset="1" stop-color="#74bc00"/></linearGradient><linearGradient id="g174" gradientUnits="userSpaceOnUse" x1="297.39" y1="423.35" x2="413.89" y2="297.13"><stop offset="0" stop-color="#ffffff"/><stop offset="1" stop-color="#76ba00"/></linearGradient><linearGradient id="g175" gradientUnits="userSpaceOnUse" x1="297.39" y1="423.35" x2="413.95" y2="297.63"><stop offset="0" stop-color="#ffffff"/><stop offset="1" stop-color="#7ab800"/></linearGradient><linearGradient id="g176" gradientUnits="userSpaceOnUse" x1="297.39" y1="423.35" x2="414.06" y2="298.43"><stop offset="0" stop-color="#ffffff"/><stop offset="1" stop-color="#7cb600"/></linearGradient><linearGradient id="g177" gradientUnits="userSpaceOnUse" x1="297.39" y1="423.35" x2="414.13" y2="298.90"><stop offset="0" stop-color="#ffffff"/><stop offset="1" stop-color="#80b400"/></linearGradient><linearGradient id="g178" gradientUnits="userSpaceOnUse" x1="297.39" y1="423.35" x2="414.21" y2="299.35"><stop offset="0" stop-color="#ffffff"/><stop offset="1" stop-color="#82b200"/></linearGradient><linearGradient id="g179" gradientUnits="userSpaceOnUse" x1="297.39" y1="423.35" x2="414.24" y2="299.50"><stop offset="0" stop-color="#ffffff"/><stop offset="1" stop-color="#86b000"/></linearGradient><linearGradient id="g180" gradientUnits="userSpaceOnUse" x1="297.39" y1="423.35" x2="414.30" y2="299.79"><stop offset="0" stop-color="#ffffff"/><stop offset="1" stop-color="#88ae00"/></linearGradient><linearGradient id="g181" gradientUnits="userSpaceOnUse" x1="297.39" y1="423.35" x2="414.37" y2="300.07"><stop offset="0" stop-color="#ffffff"/><stop offset="1" stop-color="#8bad00"/></linearGradient><linearGradient id="g182" gradientUnits="userSpaceOnUse" x1="297.39" y1="423.35" x2="414.48" y2="300.48"><stop offset="0" stop-color="#ffffff"/><stop offset="1" stop-color="#8dab00"/></linearGradient><linearGradient id="g183" gradientUnits="userSpaceOnUse" x1="297.39" y1="423.35" x2="414.52" y2="300.61"><stop offset="0" stop-color="#ffffff"/><stop offset="1" stop-color="#90aa00"/></linearGradient><linearGradient id="g184" gradientUnits="userSpaceOnUse" x1="297.39" y1="423.35" x2="414.57" y2="300.73"><stop offset="0" stop-color="#ffffff"/><stop offset="1" stop-color="#92a800"/></linearGradient><linearGradient id="g185" gradientUnits="userSpaceOnUse" x1="297.39" y1="423.35" x2="414.66" y2="300.98"><stop offset="0" stop-color="#ffffff"/><stop offset="1" stop-color="#95a700"/></linearGradient><linearGradient id="g186" gradientUnits="userSpaceOnUse" x1="297.39" y1="423.35" x2="414.71" y2="301.11"><stop offset="0" stop-color="#ffffff"/><stop offset="1" stop-color="#97a500"/></linearGradient><linearGradient id="g187" gradientUnits="userSpaceOnUse" x1="297.39" y1="423.35" x2="414.87" y2="301.46"><stop offset="0" stop-color="#ffffff"/><stop offset="1" stop-color="#9aa400"/></linearGradient><linearGradient id="g188" gradientUnits="userSpaceOnUse" x1="297.39" y1="423.35" x2="414.81" y2="301.34"><stop offset="0" stop-color="#ffffff"/><stop offset="1" stop-color="#9ca200"/></linearGradient><linearGradient id="g189" gradientUnits="userSpaceOnUse" x1="297.39" y1="423.35" x2="414.93" y2="301.57"><stop offset="0" stop-color="#ffffff"/><stop offset="1" stop-color="#9fa100"/></linearGradient><linearGradient id="g190" gradientUnits="userSpaceOnUse" x1="297.39" y1="423.35" x2="414.92" y2="301.56"><stop offset="0" stop-color="#ffffff"/><stop offset="1" stop-color="#a19f00"/></linearGradient><linearGradient id="g191" gradientUnits="userSpaceOnUse" x1="297.39" y1="423.35" x2="415.06" y2="301.78"><stop offset="0" stop-color="#ffffff"/><stop offset="1" stop-color="#a29e00"/></linearGradient><linearGradient id="g192" gradientUnits="userSpaceOnUse" x1="297.39" y1="423.35" x2="415.05" y2="301.77"><stop offset="0" stop-color="#ffffff"/><stop offset="1" stop-color="#a49c00"/></linearGradient><linearGradient id="g193" gradientUnits="userSpaceOnUse" x1="297.39" y1="423.35" x2="415.13" y2="301.87"><stop offset="0" stop-color="#ffffff"/><stop offset="1" stop-color="#a69a00"/></linearGradient><linearGradient id="g194" gradientUnits="userSpaceOnUse" x1="297.39" y1="423.35" x2="415.13" y2="301.87"><stop offset="0" stop-color="#ffffff"/><stop offset="1" stop-color="#a79900"/></linearGradient><linearGradient id="g195" gradientUnits="userSpaceOnUse" x1="297.39" y1="423.35" x2="415.12" y2="301.87"><stop offset="0" stop-color="#ffffff"/><stop offset="1" stop-color="#a99700"/></linearGradient><linearGradient id="g196" gradientUnits="userSpaceOnUse" x1="297.39" y1="423.35" x2="415.21" y2="301.96"><stop offset="0" stop-color="#ffffff"/><stop offset="1" stop-color="#aa9600"/></linearGradient><linearGradient id="g197" gradientUnits="userSpaceOnUse" x1="297.39" y1="423.35" x2="415.21" y2="301.96"><stop offset="0" stop-color="#ffffff"/><stop offset="1" stop-color="#ac9400"/></linearGradient><linearGradient id="g198" gradientUnits="userSpaceOnUse" x1="297.39" y1="423.35" x2="415.30" y2="302.04"><stop offset="0" stop-color="#ffffff"/><stop offset="1" stop-color="#ae9200"/></linearGradient><linearGradient id="g199" gradientUnits="userSpaceOnUse" x1="297.39" y1="423.35" x2="415.10" y2="301.88"><stop offset="0" stop-color="#ffffff"/><stop offset="1" stop-color="#af9100"/></linearGradient><linearGradient id="g200" gradientUnits="userSpaceOnUse" x1="297.39" y1="423.35" x2="415.20" y2="301.95"><stop offset="0" stop-color="#ffffff"/><stop offset="1" stop-color="#b18f00"/></linearGradient><linearGradient id="g201" gradientUnits="userSpaceOnUse" x1="297.39" y1="423.35" x2="414.99" y2="301.80"><stop offset="0" stop-color="#ffffff"/><stop offset="1" stop-color="#b38d00"/></linearGradient><linearGradient id="g202" gradientUnits="userSpaceOnUse" x1="297.39" y1="423.35" x2="415.20" y2="301.95"><stop offset="0" stop-color="#ffffff"/><stop offset="1" stop-color="#b58c00"/></linearGradient><linearGradient id="g203" gradientUnits="userSpaceOnUse" x1="297.39" y1="423.35" x2="415.09" y2="301.87"><stop offset="0" stop-color="#ffffff"/><stop offset="1" stop-color="#b78a00"/></linearGradient><linearGradient id="g204" gradientUnits="userSpaceOnUse" x1="297.39" y1="423.35" x2="415.08" y2="301.87"><stop offset="0" stop-color="#ffffff"/><stop offset="1" stop-color="#b98800"/></linearGradient><linearGradient id="g205" gradientUnits="userSpaceOnUse" x1="297.39" y1="423.35" x2="414.95" y2="301.80"><stop offset="0" stop-color="#ffffff"/><stop offset="1" stop-color="#bb8600"/></linearGradient><linearGradient id="g206" gradientUnits="userSpaceOnUse" x1="297.39" y1="423.35" x2="415.08" y2="301.86"><stop offset="0" stop-color="#ffffff"/><stop offset="1" stop-color="#bd8400"/></linearGradient><linearGradient id="g207" gradientUnits="userSpaceOnUse" x1="297.39" y1="423.35" x2="415.07" y2="301.86"><stop offset="0" stop-color="#ffffff"/><stop offset="1" stop-color="#bf8200"/></linearGradient><linearGradient id="g208" gradientUnits="userSpaceOnUse" x1="297.39" y1="423.35" x2="415.07" y2="301.85"><stop offset="0" stop-color="#ffffff"/><stop offset="1" stop-color="#c18100"/></linearGradient><linearGradient id="g209" gradientUnits="userSpaceOnUse" x1="297.39" y1="423.35" x2="415.06" y2="301.85"><stop offset="0" stop-color="#ffffff"/><stop offset="1" stop-color="#c37f00"/></linearGradient><linearGradient id="g210" gradientUnits="userSpaceOnUse" x1="297.39" y1="423.35" x2="415.20" y2="301.90"><stop offset="0" stop-color="#ffffff"/><stop offset="1" stop-color="#c57d00"/></linearGradient><linearGradient id="g211" gradientUnits="userSpaceOnUse" x1="297.39" y1="423.35" x2="415.51" y2="302.01"><stop offset="0" stop-color="#ffffff"/><stop offset="1" stop-color="#c77c00"/></linearGradient><linearGradient id="g212" gradientUnits="userSpaceOnUse" x1="297.39" y1="423.35" x2="415.18" y2="301.91"><stop offset="0" stop-color="#ffffff"/><stop offset="1" stop-color="#c97a00"/></linearGradient><linearGradient id="g213" gradientUnits="userSpaceOnUse" x1="297.39" y1="423.35" x2="415.52" y2="302.00"><stop offset="0" stop-color="#ffffff"/><stop offset="1" stop-color="#cb7900"/></linearGradient><linearGradient id="g214" gradientUnits="userSpaceOnUse" x1="297.39" y1="423.35" x2="415.34" y2="301.95"><stop offset="0" stop-color="#ffffff"/><stop offset="1" stop-color="#cd7800"/></linearGradient><linearGradient id="g215" gradientUnits="userSpaceOnUse" x1="297.39" y1="423.35" x2="415.33" y2="301.95"><stop offset="0" stop-color="#ffffff"/><stop offset="1" stop-color="#ce7600"/></linearGradient><linearGradient id="g216" gradientUnits="userSpaceOnUse" x1="297.39" y1="423.35" x2="414.93" y2="301.87"><stop offset="0" stop-color="#ffffff"/><stop offset="1" stop-color="#d07500"/></linearGradient><linearGradient id="g217" gradientUnits="userSpaceOnUse" x1="297.39" y1="423.35" x2="415.12" y2="301.90"><stop offset="0" stop-color="#ffffff"/><stop offset="1" stop-color="#d27400"/></linearGradient><linearGradient id="g218" gradientUnits="userSpaceOnUse" x1="297.39" y1="423.35" x2="415.11" y2="301.90"><stop offset="0" stop-color="#ffffff"/><stop offset="1" stop-color="#d47200"/></linearGradient><linearGradient id="g219" gradientUnits="userSpaceOnUse" x1="297.39" y1="423.35" x2="415.10" y2="301.90"><stop offset="0" stop-color="#ffffff"/><stop offset="1" stop-color="#d67100"/></linearGradient><linearGradient id="g220" gradientUnits="userSpaceOnUse" x1="297.39" y1="423.35" x2="415.32" y2="301.93"><stop offset="0" stop-color="#ffffff"/><stop offset="1" stop-color="#d86f00"/></linearGradient><linearGradient id="g221" gradientUnits="userSpaceOnUse" x1="297.39" y1="423.35" x2="415.07" y2="301.90"><stop offset="0" stop-color="#ffffff"/><stop offset="1" stop-color="#da6e00"/></linearGradient><linearGradient id="g222" gradientUnits="userSpaceOnUse" x1="297.39" y1="423.35" x2="415.06" y2="301.90"><stop offset="0" stop-color="#ffffff"/><stop offset="1" stop-color="#db6d00"/></linearGradient><linearGradient id="g223" gradientUnits="userSpaceOnUse" x1="297.39" y1="423.35" x2="415.04" y2="301.90"><stop offset="0" stop-color="#ffffff"/><stop offset="1" stop-color="#dd6c01"/></linearGradient><linearGradient id="g224" gradientUnits="userSpaceOnUse" x1="297.39" y1="423.35" x2="415.02" y2="301.90"><stop offset="0" stop-color="#ffffff"/><stop offset="1" stop-color="#df6b01"/></linearGradient><linearGradient id="g225" gradientUnits="userSpaceOnUse" x1="297.39" y1="423.35" x2="414.70" y2="301.88"><stop offset="0" stop-color="#ffffff"/><stop offset="1" stop-color="#e06901"/></linearGradient><linearGradient id="g226" gradientUnits="userSpaceOnUse" x1="297.39" y1="423.35" x2="414.66" y2="301.88"><stop offset="0" stop-color="#ffffff"/><stop offset="1" stop-color="#e26801"/></linearGradient><linearGradient id="g227" gradientUnits="userSpaceOnUse" x1="297.39" y1="423.35" x2="414.62" y2="301.88"><stop offset="0" stop-color="#ffffff"/><stop offset="1" stop-color="#e46702"/></linearGradient><linearGradient id="g228" gradientUnits="userSpaceOnUse" x1="297.39" y1="423.35" x2="414.24" y2="301.87"><stop offset="0" stop-color="#ffffff"/><stop offset="1" stop-color="#e56602"/></linearGradient><linearGradient id="g229" gradientUnits="userSpaceOnUse" x1="297.39" y1="423.35" x2="414.91" y2="301.88"><stop offset="0" stop-color="#ffffff"/><stop offset="1" stop-color="#e76502"/></linearGradient><linearGradient id="g230" gradientUnits="userSpaceOnUse" x1="297.39" y1="423.35" x2="414.88" y2="301.88"><stop offset="0" stop-color="#ffffff"/><stop offset="1" stop-color="#e96402"/></linearGradient><linearGradient id="g231" gradientUnits="userSpaceOnUse" x1="297.39" y1="423.35" x2="415.24" y2="301.87"><stop offset="0" stop-color="#ffffff"/><stop offset="1" stop-color="#ea6303"/></linearGradient><linearGradient id="g232" gradientUnits="userSpaceOnUse" x1="297.39" y1="423.35" x2="415.22" y2="301.87"><stop offset="0" stop-color="#ffffff"/><stop offset="1" stop-color="#eb6203"/></linearGradient><linearGradient id="g233" gradientUnits="userSpaceOnUse" x1="297.39" y1="423.35" x2="415.21" y2="301.87"><stop offset="0" stop-color="#ffffff"/><stop offset="1" stop-color="#ed6103"/></linearGradient><linearGradient id="g234" gradientUnits="userSpaceOnUse" x1="297.39" y1="423.35" x2="415.19" y2="301.87"><stop offset="0" stop-color="#ffffff"/><stop offset="1" stop-color="#ee6004"/></linearGradient><linearGradient id="g235" gradientUnits="userSpaceOnUse" x1="297.39" y1="423.35" x2="415.17" y2="301.88"><stop offset="0" stop-color="#ffffff"/><stop offset="1" stop-color="#ef6004"/></linearGradient><linearGradient id="g236" gradientUnits="userSpaceOnUse" x1="297.39" y1="423.35" x2="415.66" y2="301.86"><stop offset="0" stop-color="#ffffff"/><stop offset="1" stop-color="#f05f05"/></linearGradient><linearGradient id="g237" gradientUnits="userSpaceOnUse" x1="297.39" y1="423.35" x2="415.66" y2="301.86"><stop offset="0" stop-color="#ffffff"/><stop offset="1" stop-color="#f25e05"/></linearGradient><linearGradient id="g238" gradientUnits="userSpaceOnUse" x1="297.39" y1="423.35" x2="416.23" y2="301.83"><stop offset="0" stop-color="#ffffff"/><stop offset="1" stop-color="#f35d05"/></linearGradient><linearGradient id="g239" gradientUnits="userSpaceOnUse" x1="297.39" y1="423.35" x2="415.05" y2="301.89"><stop offset="0" stop-color="#ffffff"/><stop offset="1" stop-color="#f45c06"/></linearGradient><linearGradient id="g240" gradientUnits="userSpaceOnUse" x1="297.39" y1="423.35" x2="415.03" y2="301.90"><stop offset="0" stop-color="#ffffff"/><stop offset="1" stop-color="#f55c06"/></linearGradient><linearGradient id="g241" gradientUnits="userSpaceOnUse" x1="297.39" y1="423.35" x2="414.32" y2="301.95"><stop offset="0" stop-color="#ffffff"/><stop offset="1" stop-color="#f65b06"/></linearGradient><linearGradient id="g242" gradientUnits="userSpaceOnUse" x1="297.39" y1="423.35" x2="414.96" y2="301.90"><stop offset="0" stop-color="#ffffff"/><stop offset="1" stop-color="#f65b06"/></linearGradient><linearGradient id="g243" gradientUnits="userSpaceOnUse" x1="297.39" y1="423.35" x2="414.18" y2="301.97"><stop offset="0" stop-color="#ffffff"/><stop offset="1" stop-color="#f75b07"/></linearGradient><linearGradient id="g244" gradientUnits="userSpaceOnUse" x1="297.39" y1="423.35" x2="414.91" y2="301.90"><stop offset="0" stop-color="#ffffff"/><stop offset="1" stop-color="#f75a07"/></linearGradient><linearGradient id="g245" gradientUnits="userSpaceOnUse" x1="297.39" y1="423.35" x2="414.87" y2="301.90"><stop offset="0" stop-color="#ffffff"/><stop offset="1" stop-color="#f85a07"/></linearGradient><linearGradient id="g246" gradientUnits="userSpaceOnUse" x1="297.39" y1="423.35" x2="414.82" y2="301.91"><stop offset="0" stop-color="#ffffff"/><stop offset="1" stop-color="#f85a07"/></linearGradient><linearGradient id="g247" gradientUnits="userSpaceOnUse" x1="297.39" y1="423.35" x2="414.79" y2="301.91"><stop offset="0" stop-color="#ffffff"/><stop offset="1" stop-color="#f95908"/></linearGradient><linearGradient id="g248" gradientUnits="userSpaceOnUse" x1="297.39" y1="423.35" x2="415.69" y2="301.82"><stop offset="0" stop-color="#ffffff"/><stop offset="1" stop-color="#f95908"/></linearGradient><linearGradient id="g249" gradientUnits="userSpaceOnUse" x1="297.39" y1="423.35" x2="414.72" y2="301.92"><stop offset="0" stop-color="#ffffff"/><stop offset="1" stop-color="#fa5908"/></linearGradient><linearGradient id="g250" gradientUnits="userSpaceOnUse" x1="297.39" y1="423.35" x2="414.69" y2="301.92"><stop offset="0" stop-color="#ffffff"/><stop offset="1" stop-color="#fa5808"/></linearGradient><linearGradient id="g251" gradientUnits="userSpaceOnUse" x1="297.39" y1="423.35" x2="416.74" y2="301.71"><stop offset="0" stop-color="#ffffff"/><stop offset="1" stop-color="#fb5808"/></linearGradient><linearGradient id="g252" gradientUnits="userSpaceOnUse" x1="297.39" y1="423.35" x2="415.69" y2="301.82"><stop offset="0" stop-color="#ffffff"/><stop offset="1" stop-color="#fb5808"/></linearGradient><linearGradient id="g253" gradientUnits="userSpaceOnUse" x1="297.39" y1="423.35" x2="414.56" y2="301.95"><stop offset="0" stop-color="#ffffff"/><stop offset="1" stop-color="#fc5709"/></linearGradient><linearGradient id="g254" gradientUnits="userSpaceOnUse" x1="297.39" y1="423.35" x2="415.70" y2="301.81"><stop offset="0" stop-color="#ffffff"/><stop offset="1" stop-color="#fc5709"/></linearGradient><linearGradient id="g255" gradientUnits="userSpaceOnUse" x1="297.39" y1="423.35" x2="415.70" y2="301.81"><stop offset="0" stop-color="#ffffff"/><stop offset="1" stop-color="#fd5709"/></linearGradient><linearGradient id="g256" gradientUnits="userSpaceOnUse" x1="297.39" y1="423.35" x2="415.70" y2="301.81"><stop offset="0" stop-color="#ffffff"/><stop offset="1" stop-color="#fd5609"/></linearGradient><linearGradient id="g257" gradientUnits="userSpaceOnUse" x1="297.39" y1="423.35" x2="415.70" y2="301.81"><stop offset="0" stop-color="#ffffff"/><stop offset="1" stop-color="#fe560a"/></linearGradient><linearGradient id="g258" gradientUnits="userSpaceOnUse" x1="297.39" y1="423.35" x2="415.70" y2="301.81"><stop offset="0" stop-color="#ffffff"/><stop offset="1" stop-color="#fe560a"/></linearGradient><linearGradient id="g259" gradientUnits="userSpaceOnUse" x1="297.39" y1="423.35" x2="415.70" y2="301.81"><stop offset="0" stop-color="#ffffff"/><stop offset="1" stop-color="#ff550a"/></linearGradient><linearGradient id="g260" gradientUnits="userSpaceOnUse" x1="297.39" y1="423.35" x2="415.70" y2="301.81"><stop offset="0" stop-color="#ffffff"/><stop offset="1" stop-color="#ff550a"/></linearGradient><linearGradient id="g261" gradientUnits="userSpaceOnUse" x1="297.39" y1="423.35" x2="415.70" y2="301.81"><stop offset="0" stop-color="#ffffff"/><stop offset="1" stop-color="#ff550a"/></linearGradient><linearGradient id="g262" gradientUnits="userSpaceOnUse" x1="297.39" y1="423.35" x2="413.99" y2="302.05"><stop offset="0" stop-color="#ffffff"/><stop offset="1" stop-color="#ff550a"/></linearGradient><linearGradient id="g263" gradientUnits="userSpaceOnUse" x1="297.39" y1="423.35" x2="415.70" y2="301.81"><stop offset="0" stop-color="#ffffff"/><stop offset="1" stop-color="#ff550a"/></linearGradient><linearGradient id="g264" gradientUnits="userSpaceOnUse" x1="297.39" y1="423.35" x2="413.80" y2="302.08"><stop offset="0" stop-color="#ffffff"/><stop offset="1" stop-color="#ff550a"/></linearGradient><linearGradient id="g265" gradientUnits="userSpaceOnUse" x1="297.39" y1="423.35" x2="415.70" y2="301.81"><stop offset="0" stop-color="#ffffff"/><stop offset="1" stop-color="#ff550a"/></linearGradient><linearGradient id="g266" gradientUnits="userSpaceOnUse" x1="297.39" y1="423.35" x2="413.48" y2="302.13"><stop offset="0" stop-color="#ffffff"/><stop offset="1" stop-color="#ff550a"/></linearGradient><linearGradient id="g267" gradientUnits="userSpaceOnUse" x1="297.39" y1="423.35" x2="415.71" y2="301.80"><stop offset="0" stop-color="#ffffff"/><stop offset="1" stop-color="#ff550a"/></linearGradient><linearGradient id="g268" gradientUnits="userSpaceOnUse" x1="297.39" y1="423.35" x2="413.24" y2="302.18"><stop offset="0" stop-color="#ffffff"/><stop offset="1" stop-color="#ff550a"/></linearGradient><linearGradient id="g269" gradientUnits="userSpaceOnUse" x1="297.39" y1="423.35" x2="415.71" y2="301.80"><stop offset="0" stop-color="#ffffff"/><stop offset="1" stop-color="#ff550a"/></linearGradient><linearGradient id="g270" gradientUnits="userSpaceOnUse" x1="297.39" y1="423.35" x2="415.71" y2="301.80"><stop offset="0" stop-color="#ffffff"/><stop offset="1" stop-color="#ff550a"/></linearGradient><linearGradient id="g271" gradientUnits="userSpaceOnUse" x1="297.39" y1="423.35" x2="415.71" y2="301.80"><stop offset="0" stop-color="#ffffff"/><stop offset="1" stop-color="#ff550a"/></linearGradient><linearGradient id="g272" gradientUnits="userSpaceOnUse" x1="297.39" y1="423.35" x2="415.71" y2="301.80"><stop offset="0" stop-color="#ffffff"/><stop offset="1" stop-color="#ff550a"/></linearGradient><linearGradient id="g273" gradientUnits="userSpaceOnUse" x1="297.39" y1="423.35" x2="415.71" y2="301.80"><stop offset="0" stop-color="#ffffff"/><stop offset="1" stop-color="#ff550a"/></linearGradient><linearGradient id="g274" gradientUnits="userSpaceOnUse" x1="297.39" y1="423.35" x2="415.71" y2="301.80"><stop offset="0" stop-color="#ffffff"/><stop offset="1" stop-color="#ff550a"/></linearGradient><linearGradient id="g275" gradientUnits="userSpaceOnUse" x1="297.39" y1="423.35" x2="415.71" y2="301.80"><stop offset="0" stop-color="#ffffff"/><stop offset="1" stop-color="#ff550a"/></linearGradient><linearGradient id="g276" gradientUnits="userSpaceOnUse" x1="297.39" y1="423.35" x2="415.71" y2="301.80"><stop offset="0" stop-color="#ffffff"/><stop offset="1" stop-color="#ff550a"/></linearGradient><linearGradient id="g277" gradientUnits="userSpaceOnUse" x1="297.39" y1="423.35" x2="415.71" y2="301.80"><stop offset="0" stop-color="#ffffff"/><stop offset="1" stop-color="#ff550a"/></linearGradient><linearGradient id="g278" gradientUnits="userSpaceOnUse" x1="297.39" y1="423.35" x2="415.71" y2="301.80"><stop offset="0" stop-color="#ffffff"/><stop offset="1" stop-color="#ff550a"/></linearGradient><linearGradient id="g279" gradientUnits="userSpaceOnUse" x1="297.39" y1="423.35" x2="415.71" y2="301.80"><stop offset="0" stop-color="#ffffff"/><stop offset="1" stop-color="#ff550a"/></linearGradient><linearGradient id="g280" gradientUnits="userSpaceOnUse" x1="297.39" y1="423.35" x2="415.71" y2="301.80"><stop offset="0" stop-color="#ffffff"/><stop offset="1" stop-color="#ff550a"/></linearGradient><linearGradient id="g281" gradientUnits="userSpaceOnUse" x1="297.39" y1="423.35" x2="415.71" y2="301.80"><stop offset="0" stop-color="#ffffff"/><stop offset="1" stop-color="#ff550a"/></linearGradient><linearGradient id="g282" gradientUnits="userSpaceOnUse" x1="297.39" y1="423.35" x2="415.71" y2="301.80"><stop offset="0" stop-color="#ffffff"/><stop offset="1" stop-color="#ff550a"/></linearGradient><linearGradient id="g283" gradientUnits="userSpaceOnUse" x1="297.39" y1="423.35" x2="415.71" y2="301.80"><stop offset="0" stop-color="#ffffff"/><stop offset="1" stop-color="#ff540a"/></linearGradient><linearGradient id="g284" gradientUnits="userSpaceOnUse" x1="297.39" y1="423.35" x2="415.71" y2="301.80"><stop offset="0" stop-color="#ffffff"/><stop offset="1" stop-color="#ff540a"/></linearGradient><linearGradient id="g285" gradientUnits="userSpaceOnUse" x1="297.39" y1="423.35" x2="415.71" y2="301.80"><stop offset="0" stop-color="#ffffff"/><stop offset="1" stop-color="#ff540a"/></linearGradient><linearGradient id="g286" gradientUnits="userSpaceOnUse" x1="297.39" y1="423.35" x2="415.71" y2="301.80"><stop offset="0" stop-color="#ffffff"/><stop offset="1" stop-color="#ff540a"/></linearGradient><linearGradient id="g287" gradientUnits="userSpaceOnUse" x1="297.39" y1="423.35" x2="415.71" y2="301.80"><stop offset="0" stop-color="#ffffff"/><stop offset="1" stop-color="#ff540a"/></linearGradient><linearGradient id="g288" gradientUnits="userSpaceOnUse" x1="297.39" y1="423.35" x2="415.71" y2="301.80"><stop offset="0" stop-color="#ffffff"/><stop offset="1" stop-color="#ff540a"/></linearGradient><linearGradient id="g289" gradientUnits="userSpaceOnUse" x1="297.39" y1="423.35" x2="415.71" y2="301.80"><stop offset="0" stop-color="#ffffff"/><stop offset="1" stop-color="#ff540a"/></linearGradient><linearGradient id="g290" gradientUnits="userSpaceOnUse" x1="297.39" y1="423.35" x2="415.71" y2="301.80"><stop offset="0" stop-color="#ffffff"/><stop offset="1" stop-color="#ff540a"/></linearGradient><linearGradient id="g291" gradientUnits="userSpaceOnUse" x1="297.39" y1="423.35" x2="415.71" y2="301.80"><stop offset="0" stop-color="#ffffff"/><stop offset="1" stop-color="#ff540a"/></linearGradient><linearGradient id="g292" gradientUnits="userSpaceOnUse" x1="297.39" y1="423.35" x2="415.71" y2="301.80"><stop offset="0" stop-color="#ffffff"/><stop offset="1" stop-color="#ff540a"/></linearGradient><linearGradient id="g293" gradientUnits="userSpaceOnUse" x1="297.39" y1="423.35" x2="415.71" y2="301.80"><stop offset="0" stop-color="#ffffff"/><stop offset="1" stop-color="#ff540a"/></linearGradient><linearGradient id="g294" gradientUnits="userSpaceOnUse" x1="297.39" y1="423.35" x2="415.71" y2="301.80"><stop offset="0" stop-color="#ffffff"/><stop offset="1" stop-color="#ff540a"/></linearGradient><linearGradient id="g295" gradientUnits="userSpaceOnUse" x1="297.39" y1="423.35" x2="415.71" y2="301.80"><stop offset="0" stop-color="#ffffff"/><stop offset="1" stop-color="#ff540a"/></linearGradient><linearGradient id="g296" gradientUnits="userSpaceOnUse" x1="297.39" y1="423.35" x2="415.71" y2="301.80"><stop offset="0" stop-color="#ffffff"/><stop offset="1" stop-color="#ff540a"/></linearGradient><linearGradient id="g297" gradientUnits="userSpaceOnUse" x1="297.39" y1="423.35" x2="415.71" y2="301.80"><stop offset="0" stop-color="#ffffff"/><stop offset="1" stop-color="#ff540a"/></linearGradient><linearGradient id="g298" gradientUnits="userSpaceOnUse" x1="297.39" y1="423.35" x2="415.71" y2="301.80"><stop offset="0" stop-color="#ffffff"/><stop offset="1" stop-color="#ff540a"/></linearGradient><linearGradient id="g299" gradientUnits="userSpaceOnUse" x1="297.39" y1="423.35" x2="415.71" y2="301.80"><stop offset="0" stop-color="#ffffff"/><stop offset="1" stop-color="#ff540a"/></linearGradient><linearGradient id="g300" gradientUnits="userSpaceOnUse" x1="297.39" y1="423.35" x2="415.71" y2="301.80"><stop offset="0" stop-color="#ffffff"/><stop offset="1" stop-color="#ff540a"/></linearGradient><linearGradient id="g301" gradientUnits="userSpaceOnUse" x1="297.39" y1="423.35" x2="415.71" y2="301.80"><stop offset="0" stop-color="#ffffff"/><stop offset="1" stop-color="#ff540a"/></linearGradient><linearGradient id="g302" gradientUnits="userSpaceOnUse" x1="297.39" y1="423.35" x2="415.71" y2="301.80"><stop offset="0" stop-color="#ffffff"/><stop offset="1" stop-color="#ff540a"/></linearGradient><linearGradient id="g303" gradientUnits="userSpaceOnUse" x1="297.39" y1="423.35" x2="415.71" y2="301.80"><stop offset="0" stop-color="#ffffff"/><stop offset="1" stop-color="#ff540a"/></linearGradient><linearGradient id="g304" gradientUnits="userSpaceOnUse" x1="297.39" y1="423.35" x2="415.71" y2="301.80"><stop offset="0" stop-color="#ffffff"/><stop offset="1" stop-color="#ff540a"/></linearGradient><linearGradient id="g305" gradientUnits="userSpaceOnUse" x1="297.39" y1="423.35" x2="415.71" y2="301.80"><stop offset="0" stop-color="#ffffff"/><stop offset="1" stop-color="#ff540a"/></linearGradient><linearGradient id="g306" gradientUnits="userSpaceOnUse" x1="297.39" y1="423.35" x2="415.71" y2="301.80"><stop offset="0" stop-color="#ffffff"/><stop offset="1" stop-color="#ff540a"/></linearGradient><linearGradient id="g307" gradientUnits="userSpaceOnUse" x1="297.39" y1="423.35" x2="415.71" y2="301.80"><stop offset="0" stop-color="#ffffff"/><stop offset="1" stop-color="#ff540a"/></linearGradient><linearGradient id="g308" gradientUnits="userSpaceOnUse" x1="297.39" y1="423.35" x2="415.71" y2="301.80"><stop offset="0" stop-color="#ffffff"/><stop offset="1" stop-color="#ff540a"/></linearGradient><linearGradient id="g309" gradientUnits="userSpaceOnUse" x1="297.39" y1="423.35" x2="415.71" y2="301.80"><stop offset="0" stop-color="#ffffff"/><stop offset="1" stop-color="#ff540a"/></linearGradient><linearGradient id="g310" gradientUnits="userSpaceOnUse" x1="297.39" y1="423.35" x2="415.71" y2="301.80"><stop offset="0" stop-color="#ffffff"/><stop offset="1" stop-color="#ff540a"/></linearGradient><linearGradient id="g311" gradientUnits="userSpaceOnUse" x1="297.39" y1="423.35" x2="415.71" y2="301.80"><stop offset="0" stop-color="#ffffff"/><stop offset="1" stop-color="#ff540a"/></linearGradient><linearGradient id="g312" gradientUnits="userSpaceOnUse" x1="297.39" y1="423.35" x2="415.71" y2="301.80"><stop offset="0" stop-color="#ffffff"/><stop offset="1" stop-color="#ff540a"/></linearGradient><linearGradient id="g313" gradientUnits="userSpaceOnUse" x1="297.39" y1="423.35" x2="415.71" y2="301.80"><stop offset="0" stop-color="#ffffff"/><stop offset="1" stop-color="#ff540a"/></linearGradient><linearGradient id="g314" gradientUnits="userSpaceOnUse" x1="297.39" y1="423.35" x2="415.71" y2="301.80"><stop offset="0" stop-color="#ffffff"/><stop offset="1" stop-color="#ff540a"/></linearGradient><linearGradient id="g315" gradientUnits="userSpaceOnUse" x1="297.39" y1="423.35" x2="415.71" y2="301.80"><stop offset="0" stop-color="#ffffff"/><stop offset="1" stop-color="#ff540a"/></linearGradient><linearGradient id="g316" gradientUnits="userSpaceOnUse" x1="297.39" y1="423.35" x2="415.71" y2="301.80"><stop offset="0" stop-color="#ffffff"/><stop offset="1" stop-color="#ff540a"/></linearGradient><linearGradient id="g317" gradientUnits="userSpaceOnUse" x1="297.39" y1="423.35" x2="415.71" y2="301.80"><stop offset="0" stop-color="#ffffff"/><stop offset="1" stop-color="#ff540a"/></linearGradient><linearGradient id="g318" gradientUnits="userSpaceOnUse" x1="297.39" y1="423.35" x2="415.71" y2="301.80"><stop offset="0" stop-color="#ffffff"/><stop offset="1" stop-color="#ff540a"/></linearGradient><linearGradient id="g319" gradientUnits="userSpaceOnUse" x1="297.39" y1="423.35" x2="415.71" y2="301.80"><stop offset="0" stop-color="#ffffff"/><stop offset="1" stop-color="#ff540a"/></linearGradient><linearGradient id="g320" gradientUnits="userSpaceOnUse" x1="297.39" y1="423.35" x2="359.56" y2="560.85"><stop offset="0" stop-color="#ffffff"/><stop offset="1" stop-color="#fd510d"/></linearGradient><linearGradient id="g321" gradientUnits="userSpaceOnUse" x1="297.39" y1="423.35" x2="359.56" y2="560.85"><stop offset="0" stop-color="#ffffff"/><stop offset="1" stop-color="#f84f12"/></linearGradient><linearGradient id="g322" gradientUnits="userSpaceOnUse" x1="297.39" y1="423.35" x2="359.56" y2="560.85"><stop offset="0" stop-color="#ffffff"/><stop offset="1" stop-color="#f44e17"/></linearGradient><linearGradient id="g323" gradientUnits="userSpaceOnUse" x1="297.39" y1="423.35" x2="359.56" y2="560.85"><stop offset="0" stop-color="#ffffff"/><stop offset="1" stop-color="#ef4c1c"/></linearGradient><linearGradient id="g324" gradientUnits="userSpaceOnUse" x1="297.39" y1="423.35" x2="359.56" y2="560.85"><stop offset="0" stop-color="#ffffff"/><stop offset="1" stop-color="#eb4a21"/></linearGradient><linearGradient id="g325" gradientUnits="userSpaceOnUse" x1="297.39" y1="423.35" x2="359.56" y2="560.85"><stop offset="0" stop-color="#ffffff"/><stop offset="1" stop-color="#e64926"/></linearGradient><linearGradient id="g326" gradientUnits="userSpaceOnUse" x1="297.39" y1="423.35" x2="359.56" y2="560.85"><stop offset="0" stop-color="#ffffff"/><stop offset="1" stop-color="#e2472b"/></linearGradient><linearGradient id="g327" gradientUnits="userSpaceOnUse" x1="297.39" y1="423.35" x2="359.56" y2="560.85"><stop offset="0" stop-color="#ffffff"/><stop offset="1" stop-color="#dd4530"/></linearGradient><linearGradient id="g328" gradientUnits="userSpaceOnUse" x1="297.39" y1="423.35" x2="359.56" y2="560.85"><stop offset="0" stop-color="#ffffff"/><stop offset="1" stop-color="#d94335"/></linearGradient><linearGradient id="g329" gradientUnits="userSpaceOnUse" x1="297.39" y1="423.35" x2="359.56" y2="560.85"><stop offset="0" stop-color="#ffffff"/><stop offset="1" stop-color="#d4423a"/></linearGradient><linearGradient id="g330" gradientUnits="userSpaceOnUse" x1="297.39" y1="423.35" x2="359.56" y2="560.85"><stop offset="0" stop-color="#ffffff"/><stop offset="1" stop-color="#d04040"/></linearGradient><linearGradient id="g331" gradientUnits="userSpaceOnUse" x1="297.39" y1="423.35" x2="359.56" y2="560.85"><stop offset="0" stop-color="#ffffff"/><stop offset="1" stop-color="#cb3e45"/></linearGradient><linearGradient id="g332" gradientUnits="userSpaceOnUse" x1="297.39" y1="423.35" x2="359.56" y2="560.85"><stop offset="0" stop-color="#ffffff"/><stop offset="1" stop-color="#c73d4a"/></linearGradient><linearGradient id="g333" gradientUnits="userSpaceOnUse" x1="297.39" y1="423.35" x2="359.56" y2="560.85"><stop offset="0" stop-color="#ffffff"/><stop offset="1" stop-color="#c33b4f"/></linearGradient><linearGradient id="g334" gradientUnits="userSpaceOnUse" x1="297.39" y1="423.35" x2="359.56" y2="560.85"><stop offset="0" stop-color="#ffffff"/><stop offset="1" stop-color="#be3954"/></linearGradient><linearGradient id="g335" gradientUnits="userSpaceOnUse" x1="297.39" y1="423.35" x2="359.56" y2="560.85"><stop offset="0" stop-color="#ffffff"/><stop offset="1" stop-color="#ba3859"/></linearGradient><linearGradient id="g336" gradientUnits="userSpaceOnUse" x1="297.39" y1="423.35" x2="359.56" y2="560.85"><stop offset="0" stop-color="#ffffff"/><stop offset="1" stop-color="#b5365e"/></linearGradient><linearGradient id="g337" gradientUnits="userSpaceOnUse" x1="297.39" y1="423.35" x2="359.56" y2="560.85"><stop offset="0" stop-color="#ffffff"/><stop offset="1" stop-color="#b13463"/></linearGradient><linearGradient id="g338" gradientUnits="userSpaceOnUse" x1="297.39" y1="423.35" x2="359.56" y2="560.85"><stop offset="0" stop-color="#ffffff"/><stop offset="1" stop-color="#ac3268"/></linearGradient><linearGradient id="g339" gradientUnits="userSpaceOnUse" x1="297.39" y1="423.35" x2="359.56" y2="560.85"><stop offset="0" stop-color="#ffffff"/><stop offset="1" stop-color="#a8316e"/></linearGradient><linearGradient id="g340" gradientUnits="userSpaceOnUse" x1="297.39" y1="423.35" x2="359.56" y2="560.85"><stop offset="0" stop-color="#ffffff"/><stop offset="1" stop-color="#a32f73"/></linearGradient><linearGradient id="g341" gradientUnits="userSpaceOnUse" x1="297.39" y1="423.35" x2="359.56" y2="560.85"><stop offset="0" stop-color="#ffffff"/><stop offset="1" stop-color="#9f2d78"/></linearGradient><linearGradient id="g342" gradientUnits="userSpaceOnUse" x1="297.39" y1="423.35" x2="359.56" y2="560.85"><stop offset="0" stop-color="#ffffff"/><stop offset="1" stop-color="#9a2c7d"/></linearGradient><linearGradient id="g343" gradientUnits="userSpaceOnUse" x1="297.39" y1="423.35" x2="359.56" y2="560.85"><stop offset="0" stop-color="#ffffff"/><stop offset="1" stop-color="#962a82"/></linearGradient><linearGradient id="g344" gradientUnits="userSpaceOnUse" x1="297.39" y1="423.35" x2="359.56" y2="560.85"><stop offset="0" stop-color="#ffffff"/><stop offset="1" stop-color="#912887"/></linearGradient><linearGradient id="g345" gradientUnits="userSpaceOnUse" x1="297.39" y1="423.35" x2="359.56" y2="560.85"><stop offset="0" stop-color="#ffffff"/><stop offset="1" stop-color="#8d268c"/></linearGradient><linearGradient id="g346" gradientUnits="userSpaceOnUse" x1="297.39" y1="423.35" x2="359.56" y2="560.85"><stop offset="0" stop-color="#ffffff"/><stop offset="1" stop-color="#882591"/></linearGradient><linearGradient id="g347" gradientUnits="userSpaceOnUse" x1="297.39" y1="423.35" x2="359.56" y2="560.85"><stop offset="0" stop-color="#ffffff"/><stop offset="1" stop-color="#842396"/></linearGradient><linearGradient id="g348" gradientUnits="userSpaceOnUse" x1="297.39" y1="423.35" x2="359.56" y2="560.85"><stop offset="0" stop-color="#ffffff"/><stop offset="1" stop-color="#7f219b"/></linearGradient><linearGradient id="g349" gradientUnits="userSpaceOnUse" x1="297.39" y1="423.35" x2="359.56" y2="560.85"><stop offset="0" stop-color="#ffffff"/><stop offset="1" stop-color="#7b20a1"/></linearGradient><linearGradient id="g350" gradientUnits="userSpaceOnUse" x1="297.39" y1="423.35" x2="359.56" y2="560.85"><stop offset="0" stop-color="#ffffff"/><stop offset="1" stop-color="#761ea6"/></linearGradient><linearGradient id="g351" gradientUnits="userSpaceOnUse" x1="297.39" y1="423.35" x2="359.56" y2="560.85"><stop offset="0" stop-color="#ffffff"/><stop offset="1" stop-color="#721cab"/></linearGradient><linearGradient id="g352" gradientUnits="userSpaceOnUse" x1="297.39" y1="423.35" x2="359.56" y2="560.85"><stop offset="0" stop-color="#ffffff"/><stop offset="1" stop-color="#6d1ab0"/></linearGradient><linearGradient id="g353" gradientUnits="userSpaceOnUse" x1="297.39" y1="423.35" x2="359.56" y2="560.85"><stop offset="0" stop-color="#ffffff"/><stop offset="1" stop-color="#6919b5"/></linearGradient><linearGradient id="g354" gradientUnits="userSpaceOnUse" x1="297.39" y1="423.35" x2="359.56" y2="560.85"><stop offset="0" stop-color="#ffffff"/><stop offset="1" stop-color="#6417ba"/></linearGradient><linearGradient id="g355" gradientUnits="userSpaceOnUse" x1="297.39" y1="423.35" x2="359.56" y2="560.85"><stop offset="0" stop-color="#ffffff"/><stop offset="1" stop-color="#6015bf"/></linearGradient><linearGradient id="g356" gradientUnits="userSpaceOnUse" x1="297.39" y1="423.35" x2="359.56" y2="560.85"><stop offset="0" stop-color="#ffffff"/><stop offset="1" stop-color="#5c14c4"/></linearGradient><linearGradient id="g357" gradientUnits="userSpaceOnUse" x1="297.39" y1="423.35" x2="359.56" y2="560.85"><stop offset="0" stop-color="#ffffff"/><stop offset="1" stop-color="#5712c9"/></linearGradient><linearGradient id="g358" gradientUnits="userSpaceOnUse" x1="297.39" y1="423.35" x2="359.56" y2="560.85"><stop offset="0" stop-color="#ffffff"/><stop offset="1" stop-color="#5310cf"/></linearGradient><linearGradient id="g359" gradientUnits="userSpaceOnUse" x1="297.39" y1="423.35" x2="359.56" y2="560.85"><stop offset="0" stop-color="#ffffff"/><stop offset="1" stop-color="#4e0fd4"/></linearGradient><linearGradient id="g360" gradientUnits="userSpaceOnUse" x1="297.39" y1="423.35" x2="359.56" y2="560.85"><stop offset="0" stop-color="#ffffff"/><stop offset="1" stop-color="#4a0dd9"/></linearGradient><linearGradient id="g361" gradientUnits="userSpaceOnUse" x1="297.39" y1="423.35" x2="359.56" y2="560.85"><stop offset="0" stop-color="#ffffff"/><stop offset="1" stop-color="#450bde"/></linearGradient><linearGradient id="g362" gradientUnits="userSpaceOnUse" x1="297.39" y1="423.35" x2="359.56" y2="560.85"><stop offset="0" stop-color="#ffffff"/><stop offset="1" stop-color="#4109e3"/></linearGradient><linearGradient id="g363" gradientUnits="userSpaceOnUse" x1="297.39" y1="423.35" x2="359.56" y2="560.85"><stop offset="0" stop-color="#ffffff"/><stop offset="1" stop-color="#3c08e8"/></linearGradient><linearGradient id="g364" gradientUnits="userSpaceOnUse" x1="297.39" y1="423.35" x2="359.56" y2="560.85"><stop offset="0" stop-color="#ffffff"/><stop offset="1" stop-color="#3806ed"/></linearGradient><linearGradient id="g365" gradientUnits="userSpaceOnUse" x1="297.39" y1="423.35" x2="359.56" y2="560.85"><stop offset="0" stop-color="#ffffff"/><stop offset="1" stop-color="#3304f2"/></linearGradient><linearGradient id="g366" gradientUnits="userSpaceOnUse" x1="297.39" y1="423.35" x2="359.56" y2="560.85"><stop offset="0" stop-color="#ffffff"/><stop offset="1" stop-color="#2f03f7"/></linearGradient><linearGradient id="g367" gradientUnits="userSpaceOnUse" x1="297.39" y1="423.35" x2="359.56" y2="560.85"><stop offset="0" stop-color="#ffffff"/><stop offset="1" stop-color="#2a01fc"/></linearGradient></defs><g shape-rendering="crispEdges"><path d="M297.39 423.35L193.44 635.95L193.44 635.95z" fill="url(#g0)"/><path d="M297.39 423.35L193.44 635.95L193.42 635.95z" fill="url(#g1)"/><path d="M297.39 423.35L193.42 635.95L193.41 635.94z" fill="url(#g2)"/><path d="M297.39 423.35L193.41 635.94L193.40 635.94z" fill="url(#g3)"/><path d="M297.39 423.35L193.40 635.94L193.38 635.94z" fill="url(#g4)"/><path d="M297.39 423.35L193.38 635.94L193.35 635.95z" fill="url(#g5)"/><path d="M297.39 423.35L193.35 635.95L193.33 635.95z" fill="url(#g6)"/><path d="M297.39 423.35L193.33 635.95L193.29 635.97z" fill="url(#g7)"/><path d="M297.39 423.35L193.29 635.97L193.27 635.97z" fill="url(#g8)"/><path d="M297.39 423.35L193.27 635.97L193.23 635.98z" fill="url(#g9)"/><path d="M297.39 423.35L193.23 635.98L193.20 635.98z" fill="url(#g10)"/><path d="M297.39 423.35L193.20 635.98L193.17 635.98z" fill="url(#g11)"/><path d="M297.39 423.35L193.17 635.98L193.13 635.97z" fill="url(#g12)"/><path d="M297.39 423.35L193.13 635.97L193.10 635.97z" fill="url(#g13)"/><path d="M297.39 423.35L193.10 635.97L193.07 635.98z" fill="url(#g14)"/><path d="M297.39 423.35L193.07 635.98L193.03 635.99z" fill="url(#g15)"/><path d="M297.39 423.35L193.03 635.99L193.00 636.01z" fill="url(#g16)"/><path d="M297.39 423.35L193.00 636.01L192.98 636.03z" fill="url(#g17)"/><path d="M297.39 423.35L192.98 636.03L192.94 636.05z" fill="url(#g18)"/><path d="M297.39 423.35L192.94 636.05L192.91 636.06z" fill="url(#g19)"/><path d="M297.39 423.35L192.91 636.06L192.87 636.07z" fill="url(#g20)"/><path d="M297.39 423.35L192.87 636.07L192.83 636.07z" fill="url(#g21)"/><path d="M297.39 423.35L192.83 636.07L192.79 636.07z" fill="url(#g22)"/><path d="M297.39 423.35L192.79 636.07L192.74 636.07z" fill="url(#g23)"/><path d="M297.39 423.35L192.74 636.07L192.69 636.07z" fill="url(#g24)"/><path d="M297.39 423.35L192.69 636.07L192.64 636.07z" fill="url(#g25)"/><path d="M297.39 423.35L192.64 636.07L192.58 636.07z" fill="url(#g26)"/><path d="M297.39 423.35L192.58 636.07L192.52 636.07z" fill="url(#g27)"/><path d="M297.39 423.35L192.52 636.07L192.45 636.07z" fill="url(#g28)"/><path d="M297.39 423.35L192.45 636.07L192.39 636.06z" fill="url(#g29)"/><path d="M297.39 423.35L192.39 636.06L192.33 636.06z" fill="url(#g30)"/><path d="M297.39 423.35L192.33 636.06L192.27 636.06z" fill="url(#g31)"/><path d="M297.39 423.35L192.27 636.06L192.20 636.06z" fill="url(#g32)"/><path d="M297.39 423.35L192.20 636.06L192.13 636.05z" fill="url(#g33)"/><path d="M297.39 423.35L192.13 636.05L192.05 636.04z" fill="url(#g34)"/><path d="M297.39 423.35L192.05 636.04L191.97 636.02z" fill="url(#g35)"/><path d="M297.39 423.35L191.97 636.02L191.89 635.99z" fill="url(#g36)"/><path d="M297.39 423.35L191.89 635.99L191.80 635.96z" fill="url(#g37)"/><path d="M297.39 423.35L191.80 635.96L191.70 635.91z" fill="url(#g38)"/><path d="M297.39 423.35L191.70 635.91L191.58 635.86z" fill="url(#g39)"/><path d="M297.39 423.35L191.58 635.86L191.45 635.79z" fill="url(#g40)"/><path d="M297.39 423.35L191.45 635.79L191.31 635.71z" fill="url(#g41)"/><path d="M297.39 423.35L191.31 635.71L191.16 635.62z" fill="url(#g42)"/><path d="M297.39 423.35L191.16 635.62L190.99 635.51z" fill="url(#g43)"/><path d="M297.39 423.35L190.99 635.51L190.82 635.40z" fill="url(#g44)"/><path d="M297.39 423.35L190.82 635.40L190.64 635.27z" fill="url(#g45)"/><path d="M297.39 423.35L190.64 635.27L190.46 635.14z" fill="url(#g46)"/><path d="M297.39 423.35L190.46 635.14L190.27 634.99z" fill="url(#g47)"/><path d="M297.39 423.35L190.27 634.99L190.06 634.83z" fill="url(#g48)"/><path d="M297.39 423.35L190.06 634.83L189.84 634.65z" fill="url(#g49)"/><path d="M297.39 423.35L189.84 634.65L189.60 634.46z" fill="url(#g50)"/><path d="M297.39 423.35L189.60 634.46L189.34 634.26z" fill="url(#g51)"/><path d="M297.39 423.35L189.34 634.26L189.07 634.04z" fill="url(#g52)"/><path d="M297.39 423.35L189.07 634.04L188.78 633.79z" fill="url(#g53)"/><path d="M297.39 423.35L188.78 633.79L188.48 633.54z" fill="url(#g54)"/><path d="M297.39 423.35L188.48 633.54L188.17 633.26z" fill="url(#g55)"/><path d="M297.39 423.35L188.17 633.26L187.84 632.98z" fill="url(#g56)"/><path d="M297.39 423.35L187.84 632.98L187.51 632.67z" fill="url(#g57)"/><path d="M297.39 423.35L187.51 632.67L187.15 632.34z" fill="url(#g58)"/><path d="M297.39 423.35L187.15 632.34L186.76 632.00z" fill="url(#g59)"/><path d="M297.39 423.35L186.76 632.00L186.36 631.64z" fill="url(#g60)"/><path d="M297.39 423.35L186.36 631.64L185.93 631.27z" fill="url(#g61)"/><path d="M297.39 423.35L185.93 631.27L185.48 630.88z" fill="url(#g62)"/><path d="M297.39 423.35L185.48 630.88L185.00 630.48z" fill="url(#g63)"/><path d="M297.39 423.35L185.00 630.48L184.48 630.03z" fill="url(#g64)"/><path d="M297.39 423.35L184.48 630.03L183.93 629.56z" fill="url(#g65)"/><path d="M297.39 423.35L183.93 629.56L183.35 629.07z" fill="url(#g66)"/><path d="M297.39 423.35L183.35 629.07L182.73 628.54z" fill="url(#g67)"/><path d="M297.39 423.35L182.73 628.54L182.09 627.99z" fill="url(#g68)"/><path d="M297.39 423.35L182.09 627.99L181.41 627.41z" fill="url(#g69)"/><path d="M297.39 423.35L181.41 627.41L180.70 626.81z" fill="url(#g70)"/><path d="M297.39 423.35L180.70 626.81L179.96 626.18z" fill="url(#g71)"/><path d="M297.39 423.35L179.96 626.18L179.18 625.51z" fill="url(#g72)"/><path d="M297.39 423.35L179.18 625.51L178.37 624.80z" fill="url(#g73)"/><path d="M297.39 423.35L178.37 624.80L177.52 624.03z" fill="url(#g74)"/><path d="M297.39 423.35L177.52 624.03L176.63 623.21z" fill="url(#g75)"/><path d="M297.39 423.35L176.63 623.21L175.70 622.36z" fill="url(#g76)"/><path d="M297.39 423.35L175.70 622.36L174.73 621.45z" fill="url(#g77)"/><path d="M297.39 423.35L174.73 621.45L173.72 620.46z" fill="url(#g78)"/><path d="M297.39 423.35L173.72 620.46L172.67 619.36z" fill="url(#g79)"/><path d="M297.39 423.35L172.67 619.36L171.61 618.22z" fill="url(#g80)"/><path d="M297.39 423.35L171.61 618.22L170.51 617.04z" fill="url(#g81)"/><path d="M297.39 423.35L170.51 617.04L169.37 615.74z" fill="url(#g82)"/><path d="M297.39 423.35L169.37 615.74L168.15 614.27z" fill="url(#g83)"/><path d="M297.39 423.35L168.15 614.27L166.85 612.54z" fill="url(#g84)"/><path d="M297.39 423.35L166.85 612.54L165.44 610.59z" fill="url(#g85)"/><path d="M297.39 423.35L165.44 610.59L163.96 608.46z" fill="url(#g86)"/><path d="M297.39 423.35L163.96 608.46L162.40 606.11z" fill="url(#g87)"/><path d="M297.39 423.35L162.40 606.11L160.74 603.48z" fill="url(#g88)"/><path d="M297.39 423.35L160.74 603.48L159.01 600.52z" fill="url(#g89)"/><path d="M297.39 423.35L159.01 600.52L157.19 597.28z" fill="url(#g90)"/><path d="M297.39 423.35L157.19 597.28L155.29 593.81z" fill="url(#g91)"/><path d="M297.39 423.35L155.29 593.81L153.29 590.00z" fill="url(#g92)"/><path d="M297.39 423.35L153.29 590.00L151.20 585.78z" fill="url(#g93)"/><path d="M297.39 423.35L151.20 585.78L149.00 581.05z" fill="url(#g94)"/><path d="M297.39 423.35L149.00 581.05L146.69 575.85z" fill="url(#g95)"/><path d="M297.39 423.35L146.69 575.85L144.28 570.27z" fill="url(#g96)"/><path d="M297.39 423.35L144.28 570.27L141.77 564.21z" fill="url(#g97)"/><path d="M297.39 423.35L141.77 564.21L139.14 557.57z" fill="url(#g98)"/><path d="M297.39 423.35L139.14 557.57L136.39 550.29z" fill="url(#g99)"/><path d="M297.39 423.35L136.39 550.29L133.48 542.40z" fill="url(#g100)"/><path d="M297.39 423.35L133.48 542.40L130.40 533.96z" fill="url(#g101)"/><path d="M297.39 423.35L130.40 533.96L127.23 524.90z" fill="url(#g102)"/><path d="M297.39 423.35L127.23 524.90L124.02 515.17z" fill="url(#g103)"/><path d="M297.39 423.35L124.02 515.17L120.83 504.68z" fill="url(#g104)"/><path d="M297.39 423.35L120.83 504.68L117.64 493.41z" fill="url(#g105)"/><path d="M297.39 423.35L117.64 493.41L114.40 481.41z" fill="url(#g106)"/><path d="M297.39 423.35L114.40 481.41L111.15 468.73z" fill="url(#g107)"/><path d="M297.39 423.35L111.15 468.73L107.93 455.39z" fill="url(#g108)"/><path d="M297.39 423.35L107.93 455.39L104.77 441.47z" fill="url(#g109)"/><path d="M297.39 423.35L104.77 441.47L101.61 426.77z" fill="url(#g110)"/><path d="M297.39 423.35L101.61 426.77L98.44 411.28z" fill="url(#g111)"/><path d="M297.39 423.35L98.44 411.28L95.33 395.24z" fill="url(#g112)"/><path d="M297.39 423.35L95.33 395.24L92.38 378.91z" fill="url(#g113)"/><path d="M297.39 423.35L92.38 378.91L89.66 362.52z" fill="url(#g114)"/><path d="M297.39 423.35L89.66 362.52L87.14 345.91z" fill="url(#g115)"/><path d="M297.39 423.35L87.14 345.91L84.76 328.89z" fill="url(#g116)"/><path d="M297.39 423.35L84.76 328.89L82.58 311.75z" fill="url(#g117)"/><path d="M297.39 423.35L82.58 311.75L80.68 294.77z" fill="url(#g118)"/><path d="M297.39 423.35L80.68 294.77L79.13 278.22z" fill="url(#g119)"/><path d="M297.39 423.35L79.13 278.22L77.90 261.98z" fill="url(#g120)"/><path d="M297.39 423.35L77.90 261.98L76.92 245.87z" fill="url(#g121)"/><path d="M297.39 423.35L76.92 245.87L76.28 230.07z" fill="url(#g122)"/><path d="M297.39 423.35L76.28 230.07L76.00 214.76z" fill="url(#g123)"/><path d="M297.39 423.35L76.00 214.76L76.16 200.16z" fill="url(#g124)"/><path d="M297.39 423.35L76.16 200.16L76.74 186.10z" fill="url(#g125)"/><path d="M297.39 423.35L76.74 186.10L77.71 172.48z" fill="url(#g126)"/><path d="M297.39 423.35L77.71 172.48L79.08 159.49z" fill="url(#g127)"/><path d="M297.39 423.35L79.08 159.49L80.86 147.33z" fill="url(#g128)"/><path d="M297.39 423.35L80.86 147.33L83.06 136.20z" fill="url(#g129)"/><path d="M297.39 423.35L83.06 136.20L85.72 126.04z" fill="url(#g130)"/><path d="M297.39 423.35L85.72 126.04L88.85 116.71z" fill="url(#g131)"/><path d="M297.39 423.35L88.85 116.71L92.37 108.31z" fill="url(#g132)"/><path d="M297.39 423.35L92.37 108.31L96.19 100.96z" fill="url(#g133)"/><path d="M297.39 423.35L96.19 100.96L100.26 94.74z" fill="url(#g134)"/><path d="M297.39 423.35L100.26 94.74L104.64 89.78z" fill="url(#g135)"/><path d="M297.39 423.35L104.64 89.78L109.36 86.01z" fill="url(#g136)"/><path d="M297.39 423.35L109.36 86.01L114.35 83.27z" fill="url(#g137)"/><path d="M297.39 423.35L114.35 83.27L119.49 81.37z" fill="url(#g138)"/><path d="M297.39 423.35L119.49 81.37L124.69 80.13z" fill="url(#g139)"/><path d="M297.39 423.35L124.69 80.13L129.98 79.75z" fill="url(#g140)"/><path d="M297.39 423.35L129.98 79.75L135.43 80.34z" fill="url(#g141)"/><path d="M297.39 423.35L135.43 80.34L140.98 81.63z" fill="url(#g142)"/><path d="M297.39 423.35L140.98 81.63L146.57 83.35z" fill="url(#g143)"/><path d="M297.39 423.35L146.57 83.35L152.14 85.22z" fill="url(#g144)"/><path d="M297.39 423.35L152.14 85.22L157.73 87.36z" fill="url(#g145)"/><path d="M297.39 423.35L157.73 87.36L163.37 89.94z" fill="url(#g146)"/><path d="M297.39 423.35L163.37 89.94L169.01 92.81z" fill="url(#g147)"/><path d="M297.39 423.35L169.01 92.81L174.60 95.84z" fill="url(#g148)"/><path d="M297.39 423.35L174.60 95.84L180.09 98.87z" fill="url(#g149)"/><path d="M297.39 423.35L180.09 98.87L185.47 101.92z" fill="url(#g150)"/><path d="M297.39 423.35L185.47 101.92L190.76 105.09z" fill="url(#g151)"/><path d="M297.39 423.35L190.76 105.09L196.01 108.35z" fill="url(#g152)"/><path d="M297.39 423.35L196.01 108.35L201.21 111.70z" fill="url(#g153)"/><path d="M297.39 423.35L201.21 111.70L206.38 115.12z" fill="url(#g154)"/><path d="M297.39 423.35L206.38 115.12L211.51 118.62z" fill="url(#g155)"/><path d="M297.39 423.35L211.51 118.62L216.59 122.21z" fill="url(#g156)"/><path d="M297.39 423.35L216.59 122.21L221.63 125.88z" fill="url(#g157)"/><path d="M297.39 423.35L221.63 125.88L226.66 129.62z" fill="url(#g158)"/><path d="M297.39 423.35L226.66 129.62L231.69 133.43z" fill="url(#g159)"/><path d="M297.39 423.35L231.69 133.43L236.69 137.32z" fill="url(#g160)"/><path d="M297.39 423.35L236.69 137.32L241.69 141.28z" fill="url(#g161)"/><path d="M297.39 423.35L241.69 141.28L246.67 145.32z" fill="url(#g162)"/><path d="M297.39 423.35L246.67 145.32L251.64 149.41z" fill="url(#g163)"/><path d="M297.39 423.35L251.64 149.41L256.60 153.55z" fill="url(#g164)"/><path d="M297.39 423.35L256.60 153.55L261.55 157.74z" fill="url(#g165)"/><path d="M297.39 423.35L261.55 157.74L266.49 161.99z" fill="url(#g166)"/><path d="M297.39 423.35L266.49 161.99L271.41 166.30z" fill="url(#g167)"/><path d="M297.39 423.35L271.41 166.30L276.35 170.64z" fill="url(#g168)"/><path d="M297.39 423.35L276.35 170.64L281.27 175.02z" fill="url(#g169)"/><path d="M297.39 423.35L281.27 175.02L286.20 179.43z" fill="url(#g170)"/><path d="M297.39 423.35L286.20 179.43L291.13 183.89z" fill="url(#g171)"/><path d="M297.39 423.35L291.13 183.89L296.06 188.39z" fill="url(#g172)"/><path d="M297.39 423.35L296.06 188.39L300.98 192.91z" fill="url(#g173)"/><path d="M297.39 423.35L300.98 192.91L305.91 197.46z" fill="url(#g174)"/><path d="M297.39 423.35L305.91 197.46L310.83 202.02z" fill="url(#g175)"/><path d="M297.39 423.35L310.83 202.02L315.76 206.62z" fill="url(#g176)"/><path d="M297.39 423.35L315.76 206.62L320.68 211.24z" fill="url(#g177)"/><path d="M297.39 423.35L320.68 211.24L325.61 215.88z" fill="url(#g178)"/><path d="M297.39 423.35L325.61 215.88L330.53 220.52z" fill="url(#g179)"/><path d="M297.39 423.35L330.53 220.52L335.45 225.18z" fill="url(#g180)"/><path d="M297.39 423.35L335.45 225.18L340.37 229.85z" fill="url(#g181)"/><path d="M297.39 423.35L340.37 229.85L345.28 234.53z" fill="url(#g182)"/><path d="M297.39 423.35L345.28 234.53L350.18 239.21z" fill="url(#g183)"/><path d="M297.39 423.35L350.18 239.21L355.08 243.89z" fill="url(#g184)"/><path d="M297.39 423.35L355.08 243.89L359.97 248.57z" fill="url(#g185)"/><path d="M297.39 423.35L359.97 248.57L364.85 253.26z" fill="url(#g186)"/><path d="M297.39 423.35L364.85 253.26L369.72 257.95z" fill="url(#g187)"/><path d="M297.39 423.35L369.72 257.95L374.58 262.62z" fill="url(#g188)"/><path d="M297.39 423.35L374.58 262.62L379.41 267.29z" fill="url(#g189)"/><path d="M297.39 423.35L379.41 267.29L384.24 271.95z" fill="url(#g190)"/><path d="M297.39 423.35L384.24 271.95L389.04 276.60z" fill="url(#g191)"/><path d="M297.39 423.35L389.04 276.60L393.83 281.23z" fill="url(#g192)"/><path d="M297.39 423.35L393.83 281.23L398.59 285.85z" fill="url(#g193)"/><path d="M297.39 423.35L398.59 285.85L403.32 290.43z" fill="url(#g194)"/><path d="M297.39 423.35L403.32 290.43L408.03 294.99z" fill="url(#g195)"/><path d="M297.39 423.35L408.03 294.99L412.71 299.54z" fill="url(#g196)"/><path d="M297.39 423.35L412.71 299.54L417.36 304.05z" fill="url(#g197)"/><path d="M297.39 423.35L417.36 304.05L421.98 308.54z" fill="url(#g198)"/><path d="M297.39 423.35L421.98 308.54L426.55 312.97z" fill="url(#g199)"/><path d="M297.39 423.35L426.55 312.97L431.09 317.37z" fill="url(#g200)"/><path d="M297.39 423.35L431.09 317.37L435.59 321.73z" fill="url(#g201)"/><path d="M297.39 423.35L435.59 321.73L440.05 326.06z" fill="url(#g202)"/><path d="M297.39 423.35L440.05 326.06L444.46 330.33z" fill="url(#g203)"/><path d="M297.39 423.35L444.46 330.33L448.81 334.54z" fill="url(#g204)"/><path d="M297.39 423.35L448.81 334.54L453.10 338.70z" fill="url(#g205)"/><path d="M297.39 423.35L453.10 338.70L457.36 342.81z" fill="url(#g206)"/><path d="M297.39 423.35L457.36 342.81L461.54 346.87z" fill="url(#g207)"/><path d="M297.39 423.35L461.54 346.87L465.67 350.87z" fill="url(#g208)"/><path d="M297.39 423.35L465.67 350.87L469.72 354.79z" fill="url(#g209)"/><path d="M297.39 423.35L469.72 354.79L473.70 358.65z" fill="url(#g210)"/><path d="M297.39 423.35L473.70 358.65L477.62 362.47z" fill="url(#g211)"/><path d="M297.39 423.35L477.62 362.47L481.47 366.20z" fill="url(#g212)"/><path d="M297.39 423.35L481.47 366.20L485.22 369.85z" fill="url(#g213)"/><path d="M297.39 423.35L485.22 369.85L488.86 373.39z" fill="url(#g214)"/><path d="M297.39 423.35L488.86 373.39L492.37 376.80z" fill="url(#g215)"/><path d="M297.39 423.35L492.37 376.80L495.78 380.10z" fill="url(#g216)"/><path d="M297.39 423.35L495.78 380.10L499.09 383.31z" fill="url(#g217)"/><path d="M297.39 423.35L499.09 383.31L502.31 386.43z" fill="url(#g218)"/><path d="M297.39 423.35L502.31 386.43L505.47 389.49z" fill="url(#g219)"/><path d="M297.39 423.35L505.47 389.49L508.55 392.49z" fill="url(#g220)"/><path d="M297.39 423.35L508.55 392.49L511.57 395.41z" fill="url(#g221)"/><path d="M297.39 423.35L511.57 395.41L514.51 398.25z" fill="url(#g222)"/><path d="M297.39 423.35L514.51 398.25L517.34 401.00z" fill="url(#g223)"/><path d="M297.39 423.35L517.34 401.00L520.07 403.64z" fill="url(#g224)"/><path d="M297.39 423.35L520.07 403.64L522.68 406.16z" fill="url(#g225)"/><path d="M297.39 423.35L522.68 406.16L525.18 408.58z" fill="url(#g226)"/><path d="M297.39 423.35L525.18 408.58L527.59 410.90z" fill="url(#g227)"/><path d="M297.39 423.35L527.59 410.90L529.91 413.13z" fill="url(#g228)"/><path d="M297.39 423.35L529.91 413.13L532.14 415.29z" fill="url(#g229)"/><path d="M297.39 423.35L532.14 415.29L534.29 417.37z" fill="url(#g230)"/><path d="M297.39 423.35L534.29 417.37L536.34 419.36z" fill="url(#g231)"/><path d="M297.39 423.35L536.34 419.36L538.31 421.27z" fill="url(#g232)"/><path d="M297.39 423.35L538.31 421.27L540.20 423.10z" fill="url(#g233)"/><path d="M297.39 423.35L540.20 423.10L542.01 424.86z" fill="url(#g234)"/><path d="M297.39 423.35L542.01 424.86L543.74 426.53z" fill="url(#g235)"/><path d="M297.39 423.35L543.74 426.53L545.38 428.13z" fill="url(#g236)"/><path d="M297.39 423.35L545.38 428.13L546.94 429.65z" fill="url(#g237)"/><path d="M297.39 423.35L546.94 429.65L548.43 431.11z" fill="url(#g238)"/><path d="M297.39 423.35L548.43 431.11L549.87 432.51z" fill="url(#g239)"/><path d="M297.39 423.35L549.87 432.51L551.25 433.84z" fill="url(#g240)"/><path d="M297.39 423.35L551.25 433.84L552.56 435.10z" fill="url(#g241)"/><path d="M297.39 423.35L552.56 435.10L553.81 436.31z" fill="url(#g242)"/><path d="M297.39 423.35L553.81 436.31L555.00 437.46z" fill="url(#g243)"/><path d="M297.39 423.35L555.00 437.46L556.15 438.57z" fill="url(#g244)"/><path d="M297.39 423.35L556.15 438.57L557.25 439.64z" fill="url(#g245)"/><path d="M297.39 423.35L557.25 439.64L558.29 440.64z" fill="url(#g246)"/><path d="M297.39 423.35L558.29 440.64L559.29 441.61z" fill="url(#g247)"/><path d="M297.39 423.35L559.29 441.61L560.25 442.54z" fill="url(#g248)"/><path d="M297.39 423.35L560.25 442.54L561.19 443.44z" fill="url(#g249)"/><path d="M297.39 423.35L561.19 443.44L562.10 444.32z" fill="url(#g250)"/><path d="M297.39 423.35L562.10 444.32L562.96 445.17z" fill="url(#g251)"/><path d="M297.39 423.35L562.96 445.17L563.80 445.99z" fill="url(#g252)"/><path d="M297.39 423.35L563.80 445.99L564.62 446.78z" fill="url(#g253)"/><path d="M297.39 423.35L564.62 446.78L565.40 447.54z" fill="url(#g254)"/><path d="M297.39 423.35L565.40 447.54L566.15 448.27z" fill="url(#g255)"/><path d="M297.39 423.35L566.15 448.27L566.86 448.96z" fill="url(#g256)"/><path d="M297.39 423.35L566.86 448.96L567.55 449.63z" fill="url(#g257)"/><path d="M297.39 423.35L567.55 449.63L568.21 450.27z" fill="url(#g258)"/><path d="M297.39 423.35L568.21 450.27L568.84 450.89z" fill="url(#g259)"/><path d="M297.39 423.35L568.84 450.89L569.45 451.48z" fill="url(#g260)"/><path d="M297.39 423.35L569.45 451.48L570.02 452.04z" fill="url(#g261)"/><path d="M297.39 423.35L570.02 452.04L570.58 452.57z" fill="url(#g262)"/><path d="M297.39 423.35L570.58 452.57L571.10 453.08z" fill="url(#g263)"/><path d="M297.39 423.35L571.10 453.08L571.60 453.56z" fill="url(#g264)"/><path d="M297.39 423.35L571.60 453.56L572.06 454.01z" fill="url(#g265)"/><path d="M297.39 423.35L572.06 454.01L572.48 454.42z" fill="url(#g266)"/><path d="M297.39 423.35L572.48 454.42L572.88 454.80z" fill="url(#g267)"/><path d="M297.39 423.35L572.88 454.80L573.27 455.17z" fill="url(#g268)"/><path d="M297.39 423.35L573.27 455.17L573.63 455.53z" fill="url(#g269)"/><path d="M297.39 423.35L573.63 455.53L573.99 455.87z" fill="url(#g270)"/><path d="M297.39 423.35L573.99 455.87L574.32 456.19z" fill="url(#g271)"/><path d="M297.39 423.35L574.32 456.19L574.63 456.49z" fill="url(#g272)"/><path d="M297.39 423.35L574.63 456.49L574.92 456.78z" fill="url(#g273)"/><path d="M297.39 423.35L574.92 456.78L575.21 457.06z" fill="url(#g274)"/><path d="M297.39 423.35L575.21 457.06L575.47 457.32z" fill="url(#g275)"/><path d="M297.39 423.35L575.47 457.32L575.72 457.56z" fill="url(#g276)"/><path d="M297.39 423.35L575.72 457.56L575.96 457.79z" fill="url(#g277)"/><path d="M297.39 423.35L575.96 457.79L576.18 458.00z" fill="url(#g278)"/><path d="M297.39 423.35L576.18 458.00L576.38 458.20z" fill="url(#g279)"/><path d="M297.39 423.35L576.38 458.20L576.56 458.37z" fill="url(#g280)"/><path d="M297.39 423.35L576.56 458.37L576.72 458.53z" fill="url(#g281)"/><path d="M297.39 423.35L576.72 458.53L576.87 458.68z" fill="url(#g282)"/><path d="M297.39 423.35L576.87 458.68L577.01 458.81z" fill="url(#g283)"/><path d="M297.39 423.35L577.01 458.81L577.15 458.95z" fill="url(#g284)"/><path d="M297.39 423.35L577.15 458.95L577.29 459.08z" fill="url(#g285)"/><path d="M297.39 423.35L577.29 459.08L577.41 459.20z" fill="url(#g286)"/><path d="M297.39 423.35L577.41 459.20L577.53 459.32z" fill="url(#g287)"/><path d="M297.39 423.35L577.53 459.32L577.65 459.44z" fill="url(#g288)"/><path d="M297.39 423.35L577.65 459.44L577.77 459.55z" fill="url(#g289)"/><path d="M297.39 423.35L577.77 459.55L577.88 459.66z" fill="url(#g290)"/><path d="M297.39 423.35L577.88 459.66L577.98 459.76z" fill="url(#g291)"/><path d="M297.39 423.35L577.98 459.76L578.08 459.85z" fill="url(#g292)"/><path d="M297.39 423.35L578.08 459.85L578.17 459.95z" fill="url(#g293)"/><path d="M297.39 423.35L578.17 459.95L578.27 460.04z" fill="url(#g294)"/><path d="M297.39 423.35L578.27 460.04L578.37 460.14z" fill="url(#g295)"/><path d="M297.39 423.35L578.37 460.14L578.47 460.24z" fill="url(#g296)"/><path d="M297.39 423.35L578.47 460.24L578.57 460.33z" fill="url(#g297)"/><path d="M297.39 423.35L578.57 460.33L578.66 460.42z" fill="url(#g298)"/><path d="M297.39 423.35L578.66 460.42L578.75 460.51z" fill="url(#g299)"/><path d="M297.39 423.35L578.75 460.51L578.85 460.61z" fill="url(#g300)"/><path d="M297.39 423.35L578.85 460.61L578.94 460.69z" fill="url(#g301)"/><path d="M297.39 423.35L578.94 460.69L579.03 460.78z" fill="url(#g302)"/><path d="M297.39 423.35L579.03 460.78L579.11 460.86z" fill="url(#g303)"/><path d="M297.39 423.35L579.11 460.86L579.19 460.93z" fill="url(#g304)"/><path d="M297.39 423.35L579.19 460.93L579.25 460.99z" fill="url(#g305)"/><path d="M297.39 423.35L579.25 460.99L579.30 461.04z" fill="url(#g306)"/><path d="M297.39 423.35L579.30 461.04L579.35 461.09z" fill="url(#g307)"/><path d="M297.39 423.35L579.35 461.09L579.39 461.13z" fill="url(#g308)"/><path d="M297.39 423.35L579.39 461.13L579.42 461.16z" fill="url(#g309)"/><path d="M297.39 423.35L579.42 461.16L579.46 461.20z" fill="url(#g310)"/><path d="M297.39 423.35L579.46 461.20L579.48 461.22z" fill="url(#g311)"/><path d="M297.39 423.35L579.48 461.22L579.51 461.25z" fill="url(#g312)"/><path d="M297.39 423.35L579.51 461.25L579.54 461.28z" fill="url(#g313)"/><path d="M297.39 423.35L579.54 461.28L579.56 461.30z" fill="url(#g314)"/><path d="M297.39 423.35L579.56 461.30L579.58 461.32z" fill="url(#g315)"/><path d="M297.39 423.35L579.58 461.32L579.59 461.33z" fill="url(#g316)"/><path d="M297.39 423.35L579.59 461.33L579.61 461.34z" fill="url(#g317)"/><path d="M297.39 423.35L579.61 461.34L579.62 461.36z" fill="url(#g318)"/><path d="M297.39 423.35L579.62 461.36L579.63 461.36z" fill="url(#g319)"/><path d="M297.39 423.35L579.63 461.36L571.58 465.00z" fill="url(#g320)"/><path d="M297.39 423.35L571.58 465.00L563.54 468.64z" fill="url(#g321)"/><path d="M297.39 423.35L563.54 468.64L555.49 472.28z" fill="url(#g322)"/><path d="M297.39 423.35L555.49 472.28L547.45 475.91z" fill="url(#g323)"/><path d="M297.39 423.35L547.45 475.91L539.40 479.55z" fill="url(#g324)"/><path d="M297.39 423.35L539.40 479.55L531.35 483.19z" fill="url(#g325)"/><path d="M297.39 423.35L531.35 483.19L523.31 486.82z" fill="url(#g326)"/><path d="M297.39 423.35L523.31 486.82L515.26 490.46z" fill="url(#g327)"/><path d="M297.39 423.35L515.26 490.46L507.22 494.10z" fill="url(#g328)"/><path d="M297.39 423.35L507.22 494.10L499.17 497.74z" fill="url(#g329)"/><path d="M297.39 423.35L499.17 497.74L491.13 501.37z" fill="url(#g330)"/><path d="M297.39 423.35L491.13 501.37L483.08 505.01z" fill="url(#g331)"/><path d="M297.39 423.35L483.08 505.01L475.04 508.65z" fill="url(#g332)"/><path d="M297.39 423.35L475.04 508.65L466.99 512.29z" fill="url(#g333)"/><path d="M297.39 423.35L466.99 512.29L458.95 515.92z" fill="url(#g334)"/><path d="M297.39 423.35L458.95 515.92L450.90 519.56z" fill="url(#g335)"/><path d="M297.39 423.35L450.90 519.56L442.85 523.20z" fill="url(#g336)"/><path d="M297.39 423.35L442.85 523.20L434.81 526.83z" fill="url(#g337)"/><path d="M297.39 423.35L434.81 526.83L426.76 530.47z" fill="url(#g338)"/><path d="M297.39 423.35L426.76 530.47L418.72 534.11z" fill="url(#g339)"/><path d="M297.39 423.35L418.72 534.11L410.67 537.75z" fill="url(#g340)"/><path d="M297.39 423.35L410.67 537.75L402.63 541.38z" fill="url(#g341)"/><path d="M297.39 423.35L402.63 541.38L394.58 545.02z" fill="url(#g342)"/><path d="M297.39 423.35L394.58 545.02L386.54 548.66z" fill="url(#g343)"/><path d="M297.39 423.35L386.54 548.66L378.49 552.30z" fill="url(#g344)"/><path d="M297.39 423.35L378.49 552.30L370.45 555.93z" fill="url(#g345)"/><path d="M297.39 423.35L370.45 555.93L362.40 559.57z" fill="url(#g346)"/><path d="M297.39 423.35L362.40 559.57L354.35 563.21z" fill="url(#g347)"/><path d="M297.39 423.35L354.35 563.21L346.31 566.85z" fill="url(#g348)"/><path d="M297.39 423.35L346.31 566.85L338.26 570.48z" fill="url(#g349)"/><path d="M297.39 423.35L338.26 570.48L330.22 574.12z" fill="url(#g350)"/><path d="M297.39 423.35L330.22 574.12L322.17 577.76z" fill="url(#g351)"/><path d="M297.39 423.35L322.17 577.76L314.13 581.39z" fill="url(#g352)"/><path d="M297.39 423.35L314.13 581.39L306.08 585.03z" fill="url(#g353)"/><path d="M297.39 423.35L306.08 585.03L298.04 588.67z" fill="url(#g354)"/><path d="M297.39 423.35L298.04 588.67L289.99 592.31z" fill="url(#g355)"/><path d="M297.39 423.35L289.99 592.31L281.94 595.94z" fill="url(#g356)"/><path d="M297.39 423.35L281.94 595.94L273.90 599.58z" fill="url(#g357)"/><path d="M297.39 423.35L273.90 599.58L265.85 603.22z" fill="url(#g358)"/><path d="M297.39 423.35L265.85 603.22L257.81 606.86z" fill="url(#g359)"/><path d="M297.39 423.35L257.81 606.86L249.76 610.49z" fill="url(#g360)"/><path d="M297.39 423.35L249.76 610.49L241.72 614.13z" fill="url(#g361)"/><path d="M297.39 423.35L241.72 614.13L233.67 617.77z" fill="url(#g362)"/><path d="M297.39 423.35L233.67 617.77L225.63 621.40z" fill="url(#g363)"/><path d="M297.39 423.35L225.63 621.40L217.58 625.04z" fill="url(#g364)"/><path d="M297.39 423.35L217.58 625.04L209.54 628.68z" fill="url(#g365)"/><path d="M297.39 423.35L209.54 628.68L201.49 632.32z" fill="url(#g366)"/><path d="M297.39 423.35L201.49 632.32L193.44 635.95z" fill="url(#g367)"/></g>
<rect x="72" y="34" width="623" height="1" fill="#a0a0a0"/><rect x="72" y="34" width="1" height="606" fill="#a0a0a0"/><rect x="73" y="35" width="1" height="605" fill="#d0d0d0"/><rect x="72" y="639" width="622" height="1" fill="#c0c0c0"/><rect x="142" y="35" width="1" height="604" fill="#a0a000"/><rect x="211" y="35" width="1" height="604" fill="#a0a000"/><rect x="280" y="35" width="1" height="604" fill="#a0a000"/><rect x="349" y="35" width="1" height="604" fill="#a0a000"/><rect x="417" y="35" width="1" height="604" fill="#a0a000"/><rect x="486" y="35" width="1" height="604" fill="#a0a000"/><rect x="555" y="35" width="1" height="604" fill="#a0a000"/><rect x="624" y="35" width="1" height="604" fill="#a0a000"/><rect x="74" y="605" width="620" height="1" fill="#a0a000"/><rect x="74" y="572" width="620" height="1" fill="#a0a000"/><rect x="74" y="538" width="620" height="1" fill="#a0a000"/><rect x="74" y="505" width="620" height="1" fill="#a0a000"/><rect x="74" y="471" width="620" height="1" fill="#a0a000"/><rect x="74" y="438" width="620" height="1" fill="#a0a000"/><rect x="74" y="404" width="620" height="1" fill="#a0a000"/><rect x="74" y="371" width="620" height="1" fill="#a0a000"/><rect x="74" y="337" width="620" height="1" fill="#a0a000"/><rect x="74" y="303" width="620" height="1" fill="#a0a000"/><rect x="74" y="270" width="620" height="1" fill="#a0a000"/><rect x="74" y="236" width="620" height="1" fill="#a0a000"/><rect x="74" y="203" width="620" height="1" fill="#a0a000"/><rect x="74" y="169" width="620" height="1" fill="#a0a000"/><rect x="74" y="136" width="620" height="1" fill="#a0a000"/><rect x="74" y="102" width="620" height="1" fill="#a0a000"/><rect x="74" y="69" width="620" height="1" fill="#a0a000"/>
<rect x="66" y="639" width="5" height="1" fill="#000"/><text x="64" y="643" text-anchor="end" class="tk">0.0000</text><rect x="73" y="641" width="1" height="5" fill="#000"/><text x="72.5" y="657" text-anchor="middle" class="tk">0.0000</text><rect x="66" y="572" width="5" height="1" fill="#000"/><text x="64" y="576" text-anchor="end" class="tk">0.1000</text><rect x="142" y="641" width="1" height="5" fill="#000"/><text x="141.5" y="657" text-anchor="middle" class="tk">0.1000</text><rect x="66" y="505" width="5" height="1" fill="#000"/><text x="64" y="509" text-anchor="end" class="tk">0.2000</text><rect x="211" y="641" width="1" height="5" fill="#000"/><text x="210.5" y="657" text-anchor="middle" class="tk">0.2000</text><rect x="66" y="438" width="5" height="1" fill="#000"/><text x="64" y="442" text-anchor="end" class="tk">0.3000</text><rect x="280" y="641" width="1" height="5" fill="#000"/><text x="279.5" y="657" text-anchor="middle" class="tk">0.3000</text><rect x="66" y="371" width="5" height="1" fill="#000"/><text x="64" y="375" text-anchor="end" class="tk">0.4000</text><rect x="349" y="641" width="1" height="5" fill="#000"/><text x="348.5" y="657" text-anchor="middle" class="tk">0.4000</text><rect x="66" y="303" width="5" height="1" fill="#000"/><text x="64" y="307" text-anchor="end" class="tk">0.5000</text><rect x="417" y="641" width="1" height="5" fill="#000"/><text x="416.5" y="657" text-anchor="middle" class="tk">0.5000</text><rect x="66" y="236" width="5" height="1" fill="#000"/><text x="64" y="240" text-anchor="end" class="tk">0.6000</text><rect x="486" y="641" width="1" height="5" fill="#000"/><text x="485.5" y="657" text-anchor="middle" class="tk">0.6000</text><rect x="66" y="169" width="5" height="1" fill="#000"/><text x="64" y="173" text-anchor="end" class="tk">0.7000</text><rect x="555" y="641" width="1" height="5" fill="#000"/><text x="554.5" y="657" text-anchor="middle" class="tk">0.7000</text><rect x="66" y="102" width="5" height="1" fill="#000"/><text x="64" y="106" text-anchor="end" class="tk">0.8000</text><rect x="624" y="641" width="1" height="5" fill="#000"/><text x="623.5" y="657" text-anchor="middle" class="tk">0.8000</text><rect x="66" y="35" width="5" height="1" fill="#000"/><text x="64" y="39" text-anchor="end" class="tk">0.9000</text><rect x="693" y="641" width="1" height="5" fill="#000"/><text x="692.5" y="657" text-anchor="middle" class="tk">0.9000</text><text x="383.5" y="675" text-anchor="middle" class="tk" style="font-size:12px">x</text><text transform="translate(24,339.5) rotate(-90)" text-anchor="middle" class="tk" style="font-size:12px">y</text>
<defs><clipPath id="pc"><rect x="74" y="35" width="620" height="604"/></clipPath></defs><g clip-path="url(#pc)"><path d="M104 440h1v3h-1z M103 441h3v1h-3z" fill="#808080"/><text x="65" y="446" class="wl" textLength="33" lengthAdjust="spacingAndGlyphs">490nm</text><path d="M136 549h1v3h-1z M135 550h3v1h-3z" fill="#808080"/><text x="97" y="555" class="wl" textLength="33" lengthAdjust="spacingAndGlyphs">480nm</text><path d="M159 599h1v3h-1z M158 600h3v1h-3z" fill="#808080"/><text x="120" y="605" class="wl" textLength="33" lengthAdjust="spacingAndGlyphs">470nm</text><path d="M172 618h1v3h-1z M171 619h3v1h-3z" fill="#808080"/><text x="133" y="624" class="wl" textLength="33" lengthAdjust="spacingAndGlyphs">460nm</text><path d="M181 626h1v3h-1z M180 627h3v1h-3z" fill="#808080"/><text x="142" y="632" class="wl" textLength="33" lengthAdjust="spacingAndGlyphs">450nm</text><path d="M193 634h1v3h-1z M192 635h3v1h-3z" fill="#808080"/><text x="154" y="640" class="wl" textLength="33" lengthAdjust="spacingAndGlyphs">380nm</text><path d="M79 277h1v3h-1z M78 278h3v1h-3z" fill="#808080"/><text x="84" y="283" class="wl" textLength="33" lengthAdjust="spacingAndGlyphs">500nm</text><path d="M83 135h1v3h-1z M82 136h3v1h-3z" fill="#808080"/><text x="88" y="141" class="wl" textLength="33" lengthAdjust="spacingAndGlyphs">510nm</text><path d="M124 79h1v3h-1z M123 80h3v1h-3z" fill="#808080"/><text x="129" y="85" class="wl" textLength="33" lengthAdjust="spacingAndGlyphs">520nm</text><path d="M180 97h1v3h-1z M179 98h3v1h-3z" fill="#808080"/><text x="185" y="103" class="wl" textLength="33" lengthAdjust="spacingAndGlyphs">530nm</text><path d="M231 132h1v3h-1z M230 133h3v1h-3z" fill="#808080"/><text x="236" y="138" class="wl" textLength="33" lengthAdjust="spacingAndGlyphs">540nm</text><path d="M281 174h1v3h-1z M280 175h3v1h-3z" fill="#808080"/><text x="286" y="180" class="wl" textLength="33" lengthAdjust="spacingAndGlyphs">550nm</text><path d="M330 219h1v3h-1z M329 220h3v1h-3z" fill="#808080"/><text x="335" y="225" class="wl" textLength="33" lengthAdjust="spacingAndGlyphs">560nm</text><path d="M379 266h1v3h-1z M378 267h3v1h-3z" fill="#808080"/><text x="384" y="272" class="wl" textLength="33" lengthAdjust="spacingAndGlyphs">570nm</text><path d="M426 311h1v3h-1z M425 312h3v1h-3z" fill="#808080"/><text x="431" y="317" class="wl" textLength="33" lengthAdjust="spacingAndGlyphs">580nm</text><path d="M469 353h1v3h-1z M468 354h3v1h-3z" fill="#808080"/><text x="474" y="359" class="wl" textLength="33" lengthAdjust="spacingAndGlyphs">590nm</text><path d="M505 388h1v3h-1z M504 389h3v1h-3z" fill="#808080"/><text x="510" y="394" class="wl" textLength="33" lengthAdjust="spacingAndGlyphs">600nm</text><path d="M532 414h1v3h-1z M531 415h3v1h-3z" fill="#808080"/><text x="537" y="420" class="wl" textLength="33" lengthAdjust="spacingAndGlyphs">610nm</text><path d="M549 431h1v3h-1z M548 432h3v1h-3z" fill="#808080"/><text x="554" y="437" class="wl" textLength="33" lengthAdjust="spacingAndGlyphs">620nm</text><path d="M568 449h1v3h-1z M567 450h3v1h-3z" fill="#808080"/><text x="573" y="455" class="wl" textLength="33" lengthAdjust="spacingAndGlyphs">640nm</text><path d="M579 460h1v3h-1z M578 461h3v1h-3z" fill="#808080"/><text x="584" y="466" class="wl" textLength="33" lengthAdjust="spacingAndGlyphs">780nm</text><path d="M303 414h1v3h-1z M302 415h3v1h-3z" fill="#808080"/><text x="309" y="420" class="wl" textLength="75" lengthAdjust="spacingAndGlyphs">CIE White Point</text></g>
<polyline points="542.5,425.5 541.5,424.5 540.5,423.5 539.5,423.5 539.5,422.5 538.5,421.5 537.5,420.5 536.5,419.5 535.5,419.5 535.5,418.5 534.5,418.5 534.5,417.5 533.5,417.5 532.5,416.5 531.5,415.5 530.5,414.5 529.5,413.5 528.5,413.5 527.5,412.5 527.5,411.5 526.5,411.5 525.5,410.5 524.5,409.5 523.5,408.5 522.5,407.5 521.5,406.5 520.5,405.5 519.5,405.5 518.5,404.5 517.5,403.5 516.5,402.5 515.5,401.5 514.5,400.5 513.5,400.5 512.5,399.5 511.5,398.5 510.5,397.5 509.5,396.5 507.5,395.5 506.5,395.5 505.5,394.5 504.5,393.5 503.5,392.5 502.5,391.5 501.5,390.5 499.5,390.5 498.5,389.5 497.5,388.5 496.5,387.5 494.5,386.5 493.5,385.5 492.5,385.5 491.5,384.5 489.5,383.5 488.5,382.5 487.5,381.5 486.5,380.5 484.5,380.5 483.5,379.5 482.5,378.5 480.5,377.5 479.5,377.5 478.5,376.5 476.5,375.5 475.5,374.5 473.5,374.5 472.5,373.5 471.5,372.5 469.5,372.5 468.5,371.5 466.5,370.5 465.5,370.5 463.5,369.5 462.5,369.5 461.5,368.5 459.5,368.5 458.5,367.5 456.5,367.5 455.5,366.5 454.5,366.5 452.5,365.5 451.5,365.5 449.5,364.5 448.5,364.5 446.5,364.5 445.5,363.5 443.5,363.5 442.5,363.5 440.5,362.5 439.5,362.5 437.5,362.5 435.5,362.5 434.5,361.5 432.5,361.5 431.5,361.5 429.5,361.5 428.5,361.5 426.5,361.5 424.5,360.5 423.5,360.5 421.5,360.5 420.5,360.5 418.5,360.5 416.5,360.5 415.5,360.5 413.5,360.5 412.5,360.5 410.5,361.5 408.5,361.5 407.5,361.5 405.5,361.5 404.5,361.5 402.5,361.5 400.5,361.5 399.5,362.5 397.5,362.5 396.5,362.5 394.5,362.5 392.5,363.5 391.5,363.5 389.5,363.5 388.5,364.5 386.5,364.5 385.5,365.5 383.5,365.5 382.5,365.5 380.5,366.5 379.5,366.5 377.5,367.5 376.5,367.5 374.5,368.5 373.5,368.5 371.5,369.5 370.5,369.5 368.5,370.5 367.5,370.5 365.5,371.5 364.5,371.5 362.5,372.5 361.5,373.5 360.5,373.5 358.5,374.5 357.5,375.5 355.5,375.5 354.5,376.5 353.5,376.5 351.5,377.5 350.5,378.5 349.5,379.5 347.5,379.5 346.5,380.5 345.5,381.5 343.5,381.5 342.5,382.5 341.5,383.5 339.5,384.5 338.5,384.5 337.5,385.5 336.5,386.5 334.5,387.5 333.5,387.5 332.5,388.5 331.5,389.5 329.5,390.5 328.5,391.5 327.5,391.5 326.5,392.5 325.5,393.5 324.5,394.5 322.5,394.5 321.5,395.5 320.5,396.5 319.5,397.5 318.5,398.5 317.5,398.5 316.5,399.5 315.5,400.5 314.5,401.5 313.5,401.5 312.5,402.5 311.5,403.5 310.5,404.5 309.5,404.5 308.5,405.5 307.5,406.5 306.5,407.5 305.5,408.5 304.5,408.5 303.5,409.5 302.5,410.5 301.5,411.5 300.5,412.5 299.5,413.5 298.5,414.5 297.5,414.5 296.5,415.5 296.5,416.5 295.5,416.5 294.5,417.5 293.5,418.5 292.5,419.5 291.5,420.5 290.5,421.5 289.5,421.5 289.5,422.5 288.5,423.5 287.5,423.5 287.5,424.5 286.5,425.5 285.5,425.5 285.5,426.5 284.5,427.5 283.5,427.5 283.5,428.5 282.5,428.5 281.5,429.5 281.5,430.5 280.5,430.5 280.5,431.5 279.5,432.5 278.5,433.5 277.5,433.5 277.5,434.5 276.5,434.5 276.5,435.5 275.5,436.5 274.5,437.5 273.5,438.5 272.5,439.5 271.5,440.5 270.5,441.5 270.5,442.5 269.5,442.5 269.5,443.5 268.5,443.5 268.5,444.5 267.5,444.5 267.5,445.5 266.5,446.5 265.5,446.5 265.5,447.5 264.5,448.5 264.5,449.5 263.5,449.5 263.5,450.5 262.5,450.5 262.5,451.5 261.5,451.5 261.5,452.5 260.5,452.5 260.5,453.5 260.5,454.5 259.5,454.5 259.5,455.5 258.5,455.5 258.5,456.5 257.5,456.5 257.5,457.5 256.5,457.5 256.5,458.5 255.5,459.5 255.5,460.5 254.5,460.5 254.5,461.5 253.5,461.5 253.5,462.5 252.5,462.5 252.5,463.5 251.5,464.5 251.5,465.5 250.5,465.5 250.5,466.5 249.5,466.5 249.5,467.5 248.5,468.5 248.5,469.5 247.5,469.5 247.5,470.5 246.5,470.5 246.5,471.5 245.5,472.5 245.5,473.5 244.5,473.5 244.5,474.5 243.5,474.5 243.5,475.5" fill="none" stroke="#808080" stroke-width="1"/>
<polygon points="280.5,409.5 376.5,349.5 417.5,344.5 417.5,383.5 376.5,383.5 280.5,454.5" fill="none" stroke="#000" stroke-width="1"/><rect x="376" y="349" width="1" height="35" fill="#000"/><rect x="279" y="408" width="3" height="3" fill="#000"/><rect x="375" y="348" width="3" height="3" fill="#000"/><rect x="416" y="343" width="3" height="3" fill="#000"/><rect x="416" y="382" width="3" height="3" fill="#000"/><rect x="375" y="382" width="3" height="3" fill="#000"/><rect x="279" y="453" width="3" height="3" fill="#000"/>
<rect x="74" y="365" width="620" height="1" fill="#ff0000"/><rect x="388" y="35" width="1" height="604" fill="#ff0000"/><path d="M387 363h3v5h-3z M386 364h5v3h-5z" fill="#ff0000"/>
</svg>
</body></html>
